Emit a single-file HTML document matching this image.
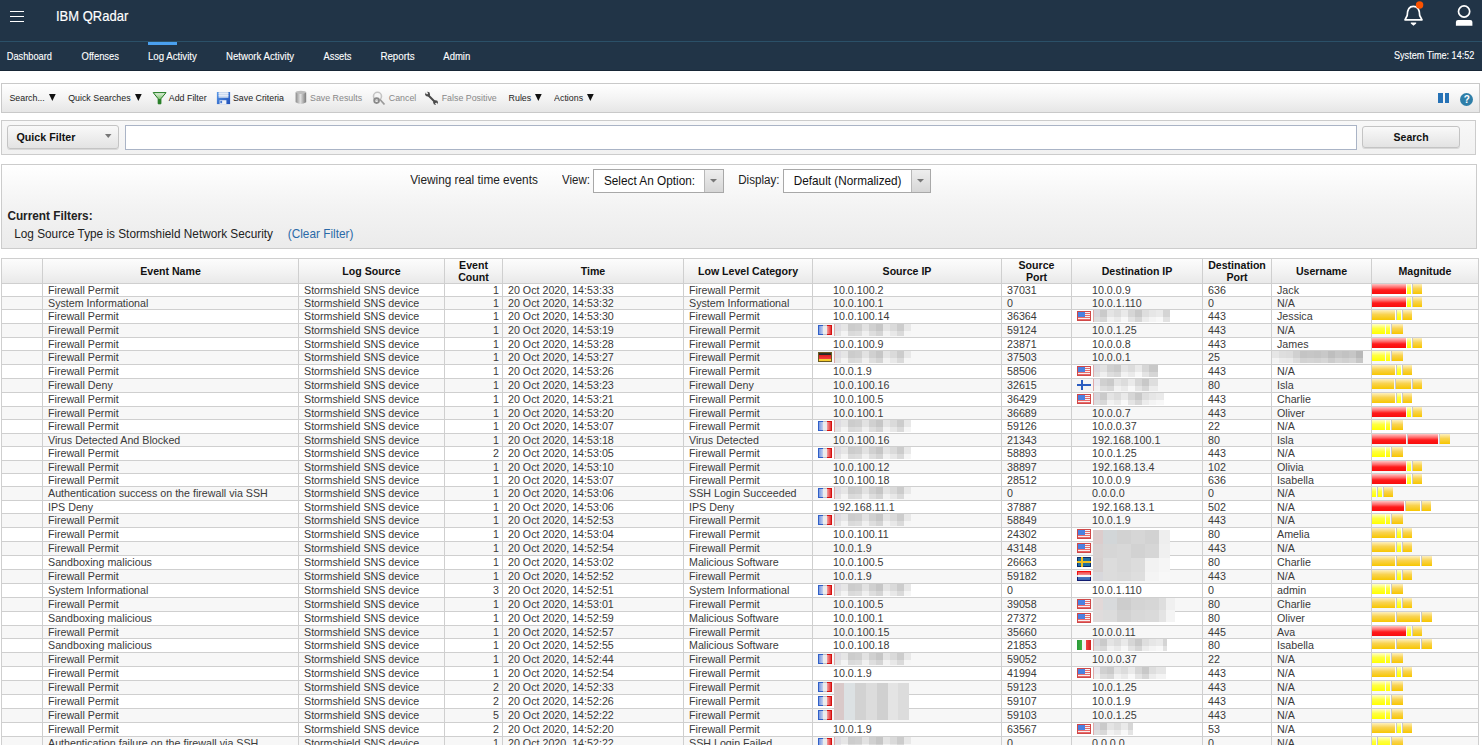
<!DOCTYPE html><html><head><meta charset="utf-8"><style>
*{box-sizing:border-box}
html,body{margin:0;padding:0;width:1482px;height:745px;overflow:hidden;background:#fff;font-family:"Liberation Sans",sans-serif;position:relative}
.a{position:absolute;white-space:nowrap}
.hl{position:absolute;height:1px;background:#cfcfcf}
.vl{position:absolute;width:1px;background:#cfcfcf}
.t{position:absolute;white-space:nowrap;font-size:10.7px;color:#3a3a3a;line-height:12px}
.th{position:absolute;white-space:nowrap;font-size:10.6px;font-weight:bold;color:#111;text-align:center;line-height:12px}
.fl{position:absolute;width:14px;height:10px;display:block;overflow:hidden}
b{position:absolute;display:block}
.mg{position:absolute;display:block;height:10px}
</style></head><body>

<div class="a" style="left:0;top:0;width:1482px;height:71px;background:#213447"></div>
<div class="a" style="left:0;top:41px;width:1482px;height:1px;background:#2b5068"></div>
<div class="a" style="left:0;top:70px;width:1482px;height:1px;background:#172636"></div>
<div class="a" style="left:10px;top:10.5px;width:14px;height:1.6px;background:#fff"></div>
<div class="a" style="left:10px;top:15.5px;width:14px;height:1.6px;background:#fff"></div>
<div class="a" style="left:10px;top:20.5px;width:14px;height:1.6px;background:#fff"></div>
<div class="a" style="left:56px;top:6.8px;font-size:13px;color:#fff;line-height:20px;-webkit-text-stroke:0.15px #fff;transform:scaleY(1.09);transform-origin:0 14.50px;">IBM QRadar</div>
<div class="a" style="left:6.7px;top:51px;font-size:9.28px;color:#fff;line-height:12px;-webkit-text-stroke:0.1px #fff;transform:scaleY(1.08);transform-origin:0 9.22px;">Dashboard</div>
<div class="a" style="left:81.6px;top:51px;font-size:9.4px;color:#fff;line-height:12px;-webkit-text-stroke:0.1px #fff;transform:scaleY(1.08);transform-origin:0 9.26px;">Offenses</div>
<div class="a" style="left:148px;top:51px;font-size:9.66px;color:#fff;line-height:12px;-webkit-text-stroke:0.1px #fff;transform:scaleY(1.08);transform-origin:0 9.35px;">Log Activity</div>
<div class="a" style="left:226px;top:51px;font-size:9.66px;color:#fff;line-height:12px;-webkit-text-stroke:0.1px #fff;transform:scaleY(1.08);transform-origin:0 9.35px;">Network Activity</div>
<div class="a" style="left:323.5px;top:51px;font-size:9.33px;color:#fff;line-height:12px;-webkit-text-stroke:0.1px #fff;transform:scaleY(1.08);transform-origin:0 9.23px;">Assets</div>
<div class="a" style="left:380.4px;top:51px;font-size:9.77px;color:#fff;line-height:12px;-webkit-text-stroke:0.1px #fff;transform:scaleY(1.08);transform-origin:0 9.39px;">Reports</div>
<div class="a" style="left:443.3px;top:51px;font-size:9.52px;color:#fff;line-height:12px;-webkit-text-stroke:0.1px #fff;transform:scaleY(1.08);transform-origin:0 9.30px;">Admin</div>
<div class="a" style="left:148px;top:42px;width:29px;height:3px;background:#4aa0f0"></div>
<div class="a" style="left:1394px;top:50px;font-size:9.1px;color:#fff;line-height:12px;-webkit-text-stroke:0.1px #fff;transform:scaleY(1.12);transform-origin:0 9.15px;">System Time: 14:52</div>
<svg class="a" style="left:1400px;top:0" width="82" height="30" viewBox="0 0 82 30">
<path d="M5 19.8 L7.2 15.5 Q7.3 6.4 13.4 6.4 Q19.6 6.4 19.7 15.5 L22 19.8 Z" fill="none" stroke="#fff" stroke-width="1.7" stroke-linejoin="round"/>
<path d="M10.8 22.6 L16.2 22.6 L16.2 23.6 L13.5 25.8 L10.8 23.6 Z" fill="#fff"/>
<circle cx="19.6" cy="5" r="3.7" fill="#fb5200"/>
<circle cx="64.1" cy="11.5" r="5.6" fill="none" stroke="#fff" stroke-width="1.7"/>
<path d="M55.9 25.8 L55.9 22 Q55.9 20 58 20 L70.3 20 Q72.4 20 72.4 22 L72.4 25.8 Z" fill="#fff"/>
</svg>
<div class="a" style="left:1px;top:83px;width:1479px;height:30px;border:1px solid #c9c9c9;background:linear-gradient(#ffffff,#f4f4f4 50%,#e6e6e6)"></div>
<div class="a" style="left:9.4px;top:92px;font-size:8.85px;color:#222;line-height:12px;transform:scaleY(1.12);transform-origin:0 9.07px;">Search...</div>
<svg class="a" style="left:49.1px;top:94px" width="7" height="7"><path d="M0 0 L6.7 0 L3.35 6.9 Z" fill="#111"/></svg>
<div class="a" style="left:68.2px;top:92px;font-size:8.85px;color:#222;line-height:12px;transform:scaleY(1.12);transform-origin:0 9.07px;">Quick Searches</div>
<svg class="a" style="left:135.4px;top:94px" width="7" height="7"><path d="M0 0 L6.7 0 L3.35 6.9 Z" fill="#111"/></svg>
<div class="a" style="left:168.8px;top:92px;font-size:8.85px;color:#222;line-height:12px;transform:scaleY(1.12);transform-origin:0 9.07px;">Add Filter</div>
<div class="a" style="left:232.9px;top:92px;font-size:8.85px;color:#222;line-height:12px;transform:scaleY(1.12);transform-origin:0 9.07px;">Save Criteria</div>
<div class="a" style="left:310px;top:92px;font-size:8.85px;color:#888;line-height:12px;transform:scaleY(1.12);transform-origin:0 9.07px;">Save Results</div>
<div class="a" style="left:388.8px;top:92px;font-size:8.85px;color:#888;line-height:12px;transform:scaleY(1.12);transform-origin:0 9.07px;">Cancel</div>
<div class="a" style="left:441.7px;top:92px;font-size:8.85px;color:#888;line-height:12px;transform:scaleY(1.12);transform-origin:0 9.07px;">False Positive</div>
<div class="a" style="left:508.6px;top:92px;font-size:8.85px;color:#222;line-height:12px;transform:scaleY(1.12);transform-origin:0 9.07px;">Rules</div>
<svg class="a" style="left:535.2px;top:94px" width="7" height="7"><path d="M0 0 L6.7 0 L3.35 6.9 Z" fill="#111"/></svg>
<div class="a" style="left:554.1px;top:92px;font-size:8.85px;color:#222;line-height:12px;transform:scaleY(1.12);transform-origin:0 9.07px;">Actions</div>
<svg class="a" style="left:587.2px;top:94px" width="7" height="7"><path d="M0 0 L6.7 0 L3.35 6.9 Z" fill="#111"/></svg>
<svg class="a" style="left:150px;top:88px" width="300" height="20" viewBox="0 0 300 20">
<defs><linearGradient id="gf" x1="0" y1="0" x2="0" y2="1"><stop offset="0" stop-color="#9ad08a"/><stop offset="0.5" stop-color="#2e9a2e"/><stop offset="1" stop-color="#1a6a1a"/></linearGradient>
<linearGradient id="gd" x1="0" y1="0" x2="1" y2="0"><stop offset="0" stop-color="#8a8a8a"/><stop offset="0.45" stop-color="#e0e0e0"/><stop offset="1" stop-color="#7a7a7a"/></linearGradient></defs>
<linearGradient id="gf2" x1="0" y1="0" x2="0" y2="1"><stop offset="0" stop-color="#e8f4e4"/><stop offset="0.6" stop-color="#7cc06c"/><stop offset="1" stop-color="#2a8a2a"/></linearGradient>
<path d="M3.2 4.6 L16 4.6 L10.9 10.8 L10.9 15.8 L8.2 15.8 L8.2 10.8 Z" fill="url(#gf2)" stroke="#1f7a1f" stroke-width="1" stroke-linejoin="round"/>
<path d="M8.2 11 L10.9 11 L10.9 15.8 L8.2 15.8 Z" fill="#2a7f2a"/>
<defs><linearGradient id="gs" x1="0" y1="0" x2="1" y2="1"><stop offset="0" stop-color="#5a9ae8"/><stop offset="1" stop-color="#1f4fb8"/></linearGradient></defs>
<rect x="66.9" y="4" width="13.2" height="12.1" fill="url(#gs)"/>
<rect x="68.6" y="4" width="9.8" height="5.8" fill="#c8d8ee"/>
<rect x="68.6" y="5.3" width="9.8" height="0.8" fill="#f2f6fc"/>
<rect x="68.6" y="7.3" width="9.8" height="0.8" fill="#f2f6fc"/>
<rect x="69.6" y="12.2" width="6.8" height="3.9" fill="#eef2f8"/>
<rect x="70.3" y="12.8" width="1.8" height="2.4" fill="#4a7ad0"/>
<ellipse cx="150.9" cy="4.5" rx="5.3" ry="1.8" fill="#bdbdbd"/>
<path d="M145.6 4.5 L145.6 14.3 Q150.9 17.8 156.2 14.3 L156.2 4.5 Q150.9 7.8 145.6 4.5Z" fill="url(#gd)"/>
<circle cx="227.5" cy="8.3" r="4" fill="none" stroke="#c4c4c4" stroke-width="1.6"/>
<circle cx="226.6" cy="12.6" r="2.4" fill="none" stroke="#8a8a8a" stroke-width="1.8"/>
<path d="M230 11.5 L234.5 16.5" stroke="#9a9a9a" stroke-width="1.8"/>
<path d="M278 7 L285 14" stroke="#4a4a4a" stroke-width="2" stroke-linecap="round"/>
<circle cx="277.6" cy="6.2" r="2.4" fill="#4a4a4a"/>
<circle cx="285.6" cy="14.6" r="2.4" fill="#4a4a4a"/>
<path d="M275.2 4.6 L276.6 3 L278.2 5.4 L277 6.4 Z" fill="#f3f3f3"/>
<path d="M288 16.2 L286.6 17.8 L285 15.4 L286.2 14.4 Z" fill="#f0f0f0"/>
</svg>
<div class="a" style="left:1438px;top:93px;width:4.5px;height:10px;background:#2672b6"></div>
<div class="a" style="left:1444.5px;top:93px;width:4.5px;height:10px;background:#2672b6"></div>
<div class="a" style="left:1460px;top:92.6px;width:13.4px;height:13.4px;border-radius:50%;background:#2e7ea8;color:#fff;font-size:10px;font-weight:bold;text-align:center;line-height:13.4px">?</div>
<div class="a" style="left:1px;top:120px;width:1475px;height:35px;border:1px solid #cccccc;background:linear-gradient(#f8f8f8,#f1f1f1)"></div>
<div class="a" style="left:7px;top:125px;width:112px;height:24px;border:1px solid #c4c4c4;border-radius:3px;background:linear-gradient(#f9f9f9,#e3e3e3);box-shadow:0 1px 0 #d8d8d8"></div>
<div class="a" style="left:16.5px;top:130px;font-size:10.7px;font-weight:bold;color:#111;line-height:14px">Quick Filter</div>
<svg class="a" style="left:105px;top:134px" width="7" height="5"><path d="M0 0 L6.5 0 L3.25 4 Z" fill="#777"/></svg>
<div class="a" style="left:125px;top:125px;width:1232px;height:25px;border:1px solid #aab4c6;background:#fff"></div>
<div class="a" style="left:1362px;top:126px;width:98px;height:22px;border:1px solid #c4c4c4;border-radius:3px;background:linear-gradient(#f9f9f9,#e3e3e3);box-shadow:0 1px 0 #d8d8d8"></div>
<div class="a" style="left:1393.6px;top:130px;font-size:10.5px;font-weight:bold;color:#111;line-height:14px">Search</div>
<div class="a" style="left:1px;top:164px;width:1476px;height:85px;border:1px solid #cccccc;background:linear-gradient(#ffffff,#f3f3f3 50%,#ebebeb)"></div>
<div class="a" style="left:410.2px;top:173px;font-size:11.8px;color:#222;line-height:14px;transform:scaleY(1.09);transform-origin:0 11.09px;">Viewing real time events</div>
<div class="a" style="left:562px;top:173px;font-size:11.5px;color:#222;line-height:14px;transform:scaleY(1.09);transform-origin:0 11.09px;">View:</div>
<div class="a" style="left:593px;top:169px;width:131px;height:24px;border:1px solid #a8a8a8;background:#fff"></div>
<div class="a" style="left:704px;top:170px;width:19px;height:22px;border-left:1px solid #b8b8b8;background:linear-gradient(#eeeeee,#d6d6d6)"></div>
<svg class="a" style="left:710px;top:179px" width="8" height="5"><path d="M0 0 L7 0 L3.5 3.5 Z" fill="#777"/></svg>
<div class="a" style="left:603.9px;top:174px;font-size:11.8px;color:#111;line-height:14px;transform:scaleY(1.09);transform-origin:0 11.09px;">Select An Option:</div>
<div class="a" style="left:738.2px;top:173px;font-size:11.600000000000001px;color:#222;line-height:14px;transform:scaleY(1.09);transform-origin:0 11.09px;">Display:</div>
<div class="a" style="left:783px;top:169px;width:148px;height:24px;border:1px solid #a8a8a8;background:#fff"></div>
<div class="a" style="left:911px;top:170px;width:19px;height:22px;border-left:1px solid #b8b8b8;background:linear-gradient(#eeeeee,#d6d6d6)"></div>
<svg class="a" style="left:917px;top:179px" width="8" height="5"><path d="M0 0 L7 0 L3.5 3.5 Z" fill="#777"/></svg>
<div class="a" style="left:793.8px;top:174px;font-size:11.75px;color:#111;line-height:14px;transform:scaleY(1.09);transform-origin:0 11.09px;">Default (Normalized)</div>
<div class="a" style="left:7.4px;top:209px;font-size:11.8px;font-weight:bold;color:#222;line-height:14px;transform:scaleY(1.09);transform-origin:0 11.09px;">Current Filters:</div>
<div class="a" style="left:14.2px;top:227px;font-size:11.8px;color:#222;line-height:14px;transform:scaleY(1.09);transform-origin:0 11.09px;">Log Source Type is Stormshield Network Security</div>
<div class="a" style="left:287.8px;top:227px;font-size:11.8px;color:#2a6aa8;line-height:14px;transform:scaleY(1.09);transform-origin:0 11.09px;">(Clear Filter)</div>
<div class="a" style="left:1px;top:258px;width:1478px;height:25px;background:linear-gradient(#fdfdfd,#f3f3f3 55%,#e9e9e9)"></div>
<div class="a" style="left:1px;top:283px;width:1478px;height:13px;background:#ffffff"></div>
<div class="a" style="left:1px;top:296px;width:1478px;height:13px;background:#f7f7f7"></div>
<div class="a" style="left:1px;top:309px;width:1478px;height:14px;background:#ffffff"></div>
<div class="a" style="left:1px;top:323px;width:1478px;height:14px;background:#f7f7f7"></div>
<div class="a" style="left:1px;top:337px;width:1478px;height:13px;background:#ffffff"></div>
<div class="a" style="left:1px;top:350px;width:1478px;height:14px;background:#f7f7f7"></div>
<div class="a" style="left:1px;top:364px;width:1478px;height:14px;background:#ffffff"></div>
<div class="a" style="left:1px;top:378px;width:1478px;height:14px;background:#f7f7f7"></div>
<div class="a" style="left:1px;top:392px;width:1478px;height:14px;background:#ffffff"></div>
<div class="a" style="left:1px;top:406px;width:1478px;height:13px;background:#f7f7f7"></div>
<div class="a" style="left:1px;top:419px;width:1478px;height:14px;background:#ffffff"></div>
<div class="a" style="left:1px;top:433px;width:1478px;height:13px;background:#f7f7f7"></div>
<div class="a" style="left:1px;top:446px;width:1478px;height:14px;background:#ffffff"></div>
<div class="a" style="left:1px;top:460px;width:1478px;height:13px;background:#f7f7f7"></div>
<div class="a" style="left:1px;top:473px;width:1478px;height:13px;background:#ffffff"></div>
<div class="a" style="left:1px;top:486px;width:1478px;height:14px;background:#f7f7f7"></div>
<div class="a" style="left:1px;top:500px;width:1478px;height:13px;background:#ffffff"></div>
<div class="a" style="left:1px;top:513px;width:1478px;height:14px;background:#f7f7f7"></div>
<div class="a" style="left:1px;top:527px;width:1478px;height:14px;background:#ffffff"></div>
<div class="a" style="left:1px;top:541px;width:1478px;height:14px;background:#f7f7f7"></div>
<div class="a" style="left:1px;top:555px;width:1478px;height:14px;background:#ffffff"></div>
<div class="a" style="left:1px;top:569px;width:1478px;height:14px;background:#f7f7f7"></div>
<div class="a" style="left:1px;top:583px;width:1478px;height:14px;background:#ffffff"></div>
<div class="a" style="left:1px;top:597px;width:1478px;height:14px;background:#f7f7f7"></div>
<div class="a" style="left:1px;top:611px;width:1478px;height:14px;background:#ffffff"></div>
<div class="a" style="left:1px;top:625px;width:1478px;height:13px;background:#f7f7f7"></div>
<div class="a" style="left:1px;top:638px;width:1478px;height:14px;background:#ffffff"></div>
<div class="a" style="left:1px;top:652px;width:1478px;height:14px;background:#f7f7f7"></div>
<div class="a" style="left:1px;top:666px;width:1478px;height:14px;background:#ffffff"></div>
<div class="a" style="left:1px;top:680px;width:1478px;height:14px;background:#f7f7f7"></div>
<div class="a" style="left:1px;top:694px;width:1478px;height:14px;background:#ffffff"></div>
<div class="a" style="left:1px;top:708px;width:1478px;height:14px;background:#f7f7f7"></div>
<div class="a" style="left:1px;top:722px;width:1478px;height:14px;background:#ffffff"></div>
<div class="a" style="left:1px;top:736px;width:1478px;height:14px;background:#f7f7f7"></div>
<div class="hl" style="left:1px;top:258px;width:1478px"></div>
<div class="hl" style="left:1px;top:283px;width:1478px"></div>
<div class="hl" style="left:1px;top:296px;width:1478px"></div>
<div class="hl" style="left:1px;top:309px;width:1478px"></div>
<div class="hl" style="left:1px;top:323px;width:1478px"></div>
<div class="hl" style="left:1px;top:337px;width:1478px"></div>
<div class="hl" style="left:1px;top:350px;width:1478px"></div>
<div class="hl" style="left:1px;top:364px;width:1478px"></div>
<div class="hl" style="left:1px;top:378px;width:1478px"></div>
<div class="hl" style="left:1px;top:392px;width:1478px"></div>
<div class="hl" style="left:1px;top:406px;width:1478px"></div>
<div class="hl" style="left:1px;top:419px;width:1478px"></div>
<div class="hl" style="left:1px;top:433px;width:1478px"></div>
<div class="hl" style="left:1px;top:446px;width:1478px"></div>
<div class="hl" style="left:1px;top:460px;width:1478px"></div>
<div class="hl" style="left:1px;top:473px;width:1478px"></div>
<div class="hl" style="left:1px;top:486px;width:1478px"></div>
<div class="hl" style="left:1px;top:500px;width:1478px"></div>
<div class="hl" style="left:1px;top:513px;width:1478px"></div>
<div class="hl" style="left:1px;top:527px;width:1478px"></div>
<div class="hl" style="left:1px;top:541px;width:1478px"></div>
<div class="hl" style="left:1px;top:555px;width:1478px"></div>
<div class="hl" style="left:1px;top:569px;width:1478px"></div>
<div class="hl" style="left:1px;top:583px;width:1478px"></div>
<div class="hl" style="left:1px;top:597px;width:1478px"></div>
<div class="hl" style="left:1px;top:611px;width:1478px"></div>
<div class="hl" style="left:1px;top:625px;width:1478px"></div>
<div class="hl" style="left:1px;top:638px;width:1478px"></div>
<div class="hl" style="left:1px;top:652px;width:1478px"></div>
<div class="hl" style="left:1px;top:666px;width:1478px"></div>
<div class="hl" style="left:1px;top:680px;width:1478px"></div>
<div class="hl" style="left:1px;top:694px;width:1478px"></div>
<div class="hl" style="left:1px;top:708px;width:1478px"></div>
<div class="hl" style="left:1px;top:722px;width:1478px"></div>
<div class="hl" style="left:1px;top:736px;width:1478px"></div>
<div class="hl" style="left:1px;top:750px;width:1478px"></div>
<div class="vl" style="left:1px;top:258px;height:487px"></div>
<div class="vl" style="left:42px;top:258px;height:487px"></div>
<div class="vl" style="left:298px;top:258px;height:487px"></div>
<div class="vl" style="left:444px;top:258px;height:487px"></div>
<div class="vl" style="left:502px;top:258px;height:487px"></div>
<div class="vl" style="left:683px;top:258px;height:487px"></div>
<div class="vl" style="left:812px;top:258px;height:487px"></div>
<div class="vl" style="left:1001px;top:258px;height:487px"></div>
<div class="vl" style="left:1071px;top:258px;height:487px"></div>
<div class="vl" style="left:1202px;top:258px;height:487px"></div>
<div class="vl" style="left:1271px;top:258px;height:487px"></div>
<div class="vl" style="left:1371px;top:258px;height:487px"></div>
<div class="vl" style="left:1478px;top:258px;height:487px"></div>
<div class="th" style="left:43px;top:265px;width:255px">Event Name</div>
<div class="th" style="left:299px;top:265px;width:145px">Log Source</div>
<div class="th" style="left:445px;top:260px;width:57px;line-height:11.6px">Event<br>Count</div>
<div class="th" style="left:503px;top:265px;width:180px">Time</div>
<div class="th" style="left:684px;top:265px;width:128px">Low Level Category</div>
<div class="th" style="left:813px;top:265px;width:188px">Source IP</div>
<div class="th" style="left:1002px;top:260px;width:69px;line-height:11.6px">Source<br>Port</div>
<div class="th" style="left:1072px;top:265px;width:130px">Destination IP</div>
<div class="th" style="left:1203px;top:260px;width:68px;line-height:11.6px">Destination<br>Port</div>
<div class="th" style="left:1272px;top:265px;width:99px">Username</div>
<div class="th" style="left:1372px;top:265px;width:106px">Magnitude</div>
<div class="t" style="left:48px;top:284px;line-height:12px">Firewall Permit</div>
<div class="t" style="left:304px;top:284px;line-height:12px">Stormshield SNS device</div>
<div class="t" style="left:445px;top:284px;width:54px;text-align:right;line-height:12px">1</div>
<div class="t" style="left:508px;top:284px;line-height:12px">20 Oct 2020, 14:53:33</div>
<div class="t" style="left:689px;top:284px;line-height:12px">Firewall Permit</div>
<div class="t" style="left:833px;top:284px;line-height:12px">10.0.100.2</div>
<div class="t" style="left:1007px;top:284px;line-height:12px">37031</div>
<div class="t" style="left:1092px;top:284px;line-height:12px">10.0.0.9</div>
<div class="t" style="left:1208px;top:284px;line-height:12px">636</div>
<div class="t" style="left:1277px;top:284px;line-height:12px">Jack</div>
<b class="mg" style="left:1372px;top:284px;width:34px;background:linear-gradient(#ffc4c4 0%,#ff6a6a 35%,#ff1a1a 60%,#f80d0d 100%)"></b>
<b class="mg" style="left:1407px;top:284px;width:4px;background:linear-gradient(#ffffc8 0%,#ffff40 45%,#ffff00 100%)"></b>
<b style="left:1412px;top:284px;width:1px;height:10px;background:#c8c8c8"></b>
<b class="mg" style="left:1413px;top:284px;width:9px;background:linear-gradient(#fdf0c0 0%,#f9d350 45%,#f7c600 100%)"></b>
<div class="t" style="left:48px;top:297px;line-height:12px">System Informational</div>
<div class="t" style="left:304px;top:297px;line-height:12px">Stormshield SNS device</div>
<div class="t" style="left:445px;top:297px;width:54px;text-align:right;line-height:12px">1</div>
<div class="t" style="left:508px;top:297px;line-height:12px">20 Oct 2020, 14:53:32</div>
<div class="t" style="left:689px;top:297px;line-height:12px">System Informational</div>
<div class="t" style="left:833px;top:297px;line-height:12px">10.0.100.1</div>
<div class="t" style="left:1007px;top:297px;line-height:12px">0</div>
<div class="t" style="left:1092px;top:297px;line-height:12px">10.0.1.110</div>
<div class="t" style="left:1208px;top:297px;line-height:12px">0</div>
<div class="t" style="left:1277px;top:297px;line-height:12px">N/A</div>
<b class="mg" style="left:1372px;top:297px;width:34px;background:linear-gradient(#ffc4c4 0%,#ff6a6a 35%,#ff1a1a 60%,#f80d0d 100%)"></b>
<b class="mg" style="left:1407px;top:297px;width:4px;background:linear-gradient(#ffffc8 0%,#ffff40 45%,#ffff00 100%)"></b>
<b style="left:1412px;top:297px;width:1px;height:10px;background:#c8c8c8"></b>
<b class="mg" style="left:1413px;top:297px;width:9px;background:linear-gradient(#fdf0c0 0%,#f9d350 45%,#f7c600 100%)"></b>
<div class="t" style="left:48px;top:310px;line-height:13px">Firewall Permit</div>
<div class="t" style="left:304px;top:310px;line-height:13px">Stormshield SNS device</div>
<div class="t" style="left:445px;top:310px;width:54px;text-align:right;line-height:13px">1</div>
<div class="t" style="left:508px;top:310px;line-height:13px">20 Oct 2020, 14:53:30</div>
<div class="t" style="left:689px;top:310px;line-height:13px">Firewall Permit</div>
<div class="t" style="left:833px;top:310px;line-height:13px">10.0.100.14</div>
<div class="t" style="left:1007px;top:310px;line-height:13px">36364</div>
<i class="fl" style="left:1077px;top:311px;background:repeating-linear-gradient(#e86a6a 0,#e86a6a 1px,#f6f0f0 1px,#f6f0f0 2px);box-shadow:inset 0 0 0 1px #d04848"><b style="position:absolute;left:1px;top:1px;width:7px;height:5px;background:#4a80e0"></b></i>
<b style="left:1093px;top:310px;width:7px;height:7px;background:#d8d6dc"></b><b style="left:1093px;top:317px;width:7px;height:5px;background:#dedede"></b><b style="left:1100px;top:310px;width:7px;height:7px;background:#cacaca"></b><b style="left:1100px;top:317px;width:7px;height:5px;background:#d8d8d8"></b><b style="left:1107px;top:310px;width:7px;height:7px;background:#e4e4e4"></b><b style="left:1107px;top:317px;width:7px;height:5px;background:#f2f2f2"></b><b style="left:1114px;top:310px;width:7px;height:7px;background:#dcdcdc"></b><b style="left:1114px;top:317px;width:7px;height:5px;background:#eaeaea"></b><b style="left:1121px;top:310px;width:7px;height:7px;background:#eaeaea"></b><b style="left:1121px;top:317px;width:7px;height:5px;background:#f8f8f8"></b><b style="left:1128px;top:310px;width:7px;height:7px;background:#d6d6d6"></b><b style="left:1128px;top:317px;width:7px;height:5px;background:#e4e4e4"></b><b style="left:1135px;top:310px;width:7px;height:7px;background:#c8c8c8"></b><b style="left:1135px;top:317px;width:7px;height:5px;background:#d6d6d6"></b><b style="left:1142px;top:310px;width:7px;height:7px;background:#dedede"></b><b style="left:1142px;top:317px;width:7px;height:5px;background:#ececec"></b><b style="left:1149px;top:310px;width:7px;height:7px;background:#e6e6e6"></b><b style="left:1149px;top:317px;width:7px;height:5px;background:#f4f4f4"></b><b style="left:1156px;top:310px;width:7px;height:7px;background:#eaeaea"></b><b style="left:1156px;top:317px;width:7px;height:5px;background:#f8f8f8"></b><b style="left:1163px;top:310px;width:7px;height:7px;background:#d4d4d4"></b><b style="left:1163px;top:317px;width:7px;height:5px;background:#e2e2e2"></b><b style="left:1093px;top:310px;width:1px;height:12px;background:#e0a8a8"></b>
<div class="t" style="left:1208px;top:310px;line-height:13px">443</div>
<div class="t" style="left:1277px;top:310px;line-height:13px">Jessica</div>
<b class="mg" style="left:1372px;top:310px;width:23px;background:linear-gradient(#fdf0c0 0%,#f9d350 45%,#f7c600 100%)"></b>
<b style="left:1396px;top:310px;width:1px;height:10px;background:#c8c8c8"></b>
<b class="mg" style="left:1397px;top:310px;width:4px;background:linear-gradient(#ffffc8 0%,#ffff40 45%,#ffff00 100%)"></b>
<b style="left:1402px;top:310px;width:1px;height:10px;background:#c8c8c8"></b>
<b class="mg" style="left:1403px;top:310px;width:9px;background:linear-gradient(#fdf0c0 0%,#f9d350 45%,#f7c600 100%)"></b>
<div class="t" style="left:48px;top:324px;line-height:13px">Firewall Permit</div>
<div class="t" style="left:304px;top:324px;line-height:13px">Stormshield SNS device</div>
<div class="t" style="left:445px;top:324px;width:54px;text-align:right;line-height:13px">1</div>
<div class="t" style="left:508px;top:324px;line-height:13px">20 Oct 2020, 14:53:19</div>
<div class="t" style="left:689px;top:324px;line-height:13px">Firewall Permit</div>
<i class="fl" style="left:818px;top:325px;"><b style="left:0;top:0;width:5px;height:10px;border:1px solid #2f5fc8;border-right:0;background:linear-gradient(90deg,#7898e0,#c4d0ee)"></b><b style="left:5px;top:0;width:4px;height:10px;border-top:1px solid #c0c0c8;border-bottom:1px solid #c0c0c8;background:#ececec"></b><b style="left:9px;top:0;width:5px;height:10px;border:1px solid #d41010;border-left:0;background:linear-gradient(90deg,#f4a0a0,#e43030)"></b></i>
<b style="left:834px;top:324px;width:7px;height:7px;background:#dedce2"></b><b style="left:834px;top:331px;width:7px;height:5px;background:#e4e4e4"></b><b style="left:841px;top:324px;width:7px;height:7px;background:#e6e6e6"></b><b style="left:841px;top:331px;width:7px;height:5px;background:#f4f4f4"></b><b style="left:848px;top:324px;width:7px;height:7px;background:#cccccc"></b><b style="left:848px;top:331px;width:7px;height:5px;background:#dadada"></b><b style="left:855px;top:324px;width:7px;height:7px;background:#cfcfcf"></b><b style="left:855px;top:331px;width:7px;height:5px;background:#dddddd"></b><b style="left:862px;top:324px;width:7px;height:7px;background:#e2e2e2"></b><b style="left:862px;top:331px;width:7px;height:5px;background:#f0f0f0"></b><b style="left:869px;top:324px;width:7px;height:7px;background:#d0d0d0"></b><b style="left:869px;top:331px;width:7px;height:5px;background:#dedede"></b><b style="left:876px;top:324px;width:7px;height:7px;background:#c6c6c6"></b><b style="left:876px;top:331px;width:7px;height:5px;background:#d4d4d4"></b><b style="left:883px;top:324px;width:7px;height:7px;background:#e4e4e4"></b><b style="left:883px;top:331px;width:7px;height:5px;background:#f2f2f2"></b><b style="left:890px;top:324px;width:7px;height:7px;background:#dadada"></b><b style="left:890px;top:331px;width:7px;height:5px;background:#e8e8e8"></b><b style="left:897px;top:324px;width:7px;height:7px;background:#cccccc"></b><b style="left:897px;top:331px;width:7px;height:5px;background:#dadada"></b><b style="left:904px;top:324px;width:7px;height:7px;background:#e8e8e8"></b><b style="left:904px;top:331px;width:7px;height:5px;background:#f6f6f6"></b><b style="left:834px;top:324px;width:1px;height:12px;background:#e0a8a8"></b>
<div class="t" style="left:1007px;top:324px;line-height:13px">59124</div>
<div class="t" style="left:1092px;top:324px;line-height:13px">10.0.1.25</div>
<div class="t" style="left:1208px;top:324px;line-height:13px">443</div>
<div class="t" style="left:1277px;top:324px;line-height:13px">N/A</div>
<b class="mg" style="left:1372px;top:324px;width:13px;background:linear-gradient(#ffffc8 0%,#ffff40 45%,#ffff00 100%)"></b>
<b class="mg" style="left:1386px;top:324px;width:4px;background:linear-gradient(#ffffc8 0%,#ffff40 45%,#ffff00 100%)"></b>
<b style="left:1391px;top:324px;width:1px;height:10px;background:#c8c8c8"></b>
<b class="mg" style="left:1392px;top:324px;width:11px;background:linear-gradient(#fdf0c0 0%,#f9d350 45%,#f7c600 100%)"></b>
<div class="t" style="left:48px;top:338px;line-height:12px">Firewall Permit</div>
<div class="t" style="left:304px;top:338px;line-height:12px">Stormshield SNS device</div>
<div class="t" style="left:445px;top:338px;width:54px;text-align:right;line-height:12px">1</div>
<div class="t" style="left:508px;top:338px;line-height:12px">20 Oct 2020, 14:53:28</div>
<div class="t" style="left:689px;top:338px;line-height:12px">Firewall Permit</div>
<div class="t" style="left:833px;top:338px;line-height:12px">10.0.100.9</div>
<div class="t" style="left:1007px;top:338px;line-height:12px">23871</div>
<div class="t" style="left:1092px;top:338px;line-height:12px">10.0.0.8</div>
<div class="t" style="left:1208px;top:338px;line-height:12px">443</div>
<div class="t" style="left:1277px;top:338px;line-height:12px">James</div>
<b class="mg" style="left:1372px;top:338px;width:34px;background:linear-gradient(#ffc4c4 0%,#ff6a6a 35%,#ff1a1a 60%,#f80d0d 100%)"></b>
<b class="mg" style="left:1407px;top:338px;width:4px;background:linear-gradient(#ffffc8 0%,#ffff40 45%,#ffff00 100%)"></b>
<b style="left:1412px;top:338px;width:1px;height:10px;background:#c8c8c8"></b>
<b class="mg" style="left:1413px;top:338px;width:9px;background:linear-gradient(#fdf0c0 0%,#f9d350 45%,#f7c600 100%)"></b>
<div class="t" style="left:48px;top:351px;line-height:13px">Firewall Permit</div>
<div class="t" style="left:304px;top:351px;line-height:13px">Stormshield SNS device</div>
<div class="t" style="left:445px;top:351px;width:54px;text-align:right;line-height:13px">1</div>
<div class="t" style="left:508px;top:351px;line-height:13px">20 Oct 2020, 14:53:27</div>
<div class="t" style="left:689px;top:351px;line-height:13px">Firewall Permit</div>
<i class="fl" style="left:818px;top:352px;background:linear-gradient(#3a3a2a 0,#222 33%,#e02020 34%,#f03a3a 66%,#f8d23a 67%,#f0c020 100%);outline:1px solid #6b5a20;outline-offset:-1px"></i>
<b style="left:834px;top:351px;width:7px;height:7px;background:#dedce2"></b><b style="left:834px;top:358px;width:7px;height:5px;background:#e4e4e4"></b><b style="left:841px;top:351px;width:7px;height:7px;background:#e6e6e6"></b><b style="left:841px;top:358px;width:7px;height:5px;background:#f4f4f4"></b><b style="left:848px;top:351px;width:7px;height:7px;background:#cccccc"></b><b style="left:848px;top:358px;width:7px;height:5px;background:#dadada"></b><b style="left:855px;top:351px;width:7px;height:7px;background:#cfcfcf"></b><b style="left:855px;top:358px;width:7px;height:5px;background:#dddddd"></b><b style="left:862px;top:351px;width:7px;height:7px;background:#e2e2e2"></b><b style="left:862px;top:358px;width:7px;height:5px;background:#f0f0f0"></b><b style="left:869px;top:351px;width:7px;height:7px;background:#d0d0d0"></b><b style="left:869px;top:358px;width:7px;height:5px;background:#dedede"></b><b style="left:876px;top:351px;width:7px;height:7px;background:#c6c6c6"></b><b style="left:876px;top:358px;width:7px;height:5px;background:#d4d4d4"></b><b style="left:883px;top:351px;width:7px;height:7px;background:#e4e4e4"></b><b style="left:883px;top:358px;width:7px;height:5px;background:#f2f2f2"></b><b style="left:890px;top:351px;width:7px;height:7px;background:#dadada"></b><b style="left:890px;top:358px;width:7px;height:5px;background:#e8e8e8"></b><b style="left:897px;top:351px;width:7px;height:7px;background:#cccccc"></b><b style="left:897px;top:358px;width:7px;height:5px;background:#dadada"></b><b style="left:904px;top:351px;width:7px;height:7px;background:#e8e8e8"></b><b style="left:904px;top:358px;width:7px;height:5px;background:#f6f6f6"></b><b style="left:834px;top:351px;width:1px;height:12px;background:#e0a8a8"></b>
<div class="t" style="left:1007px;top:351px;line-height:13px">37503</div>
<div class="t" style="left:1092px;top:351px;line-height:13px">10.0.0.1</div>
<div class="t" style="left:1208px;top:351px;line-height:13px">25</div>
<b style="left:1272px;top:351px;width:7px;height:7px;background:#e6e6e6"></b><b style="left:1272px;top:358px;width:7px;height:5px;background:#f4f4f4"></b><b style="left:1279px;top:351px;width:7px;height:7px;background:#dedede"></b><b style="left:1279px;top:358px;width:7px;height:5px;background:#ececec"></b><b style="left:1286px;top:351px;width:7px;height:7px;background:#dcdcdc"></b><b style="left:1286px;top:358px;width:7px;height:5px;background:#eaeaea"></b><b style="left:1293px;top:351px;width:7px;height:7px;background:#d0d0d0"></b><b style="left:1293px;top:358px;width:7px;height:5px;background:#dedede"></b><b style="left:1300px;top:351px;width:7px;height:7px;background:#c4c4c4"></b><b style="left:1300px;top:358px;width:7px;height:5px;background:#d2d2d2"></b><b style="left:1307px;top:351px;width:7px;height:7px;background:#c6c6c6"></b><b style="left:1307px;top:358px;width:7px;height:5px;background:#d4d4d4"></b><b style="left:1314px;top:351px;width:7px;height:7px;background:#c4c4c4"></b><b style="left:1314px;top:358px;width:7px;height:5px;background:#d2d2d2"></b><b style="left:1321px;top:351px;width:7px;height:7px;background:#c8c8c8"></b><b style="left:1321px;top:358px;width:7px;height:5px;background:#d6d6d6"></b><b style="left:1328px;top:351px;width:7px;height:7px;background:#bebebe"></b><b style="left:1328px;top:358px;width:7px;height:5px;background:#cccccc"></b><b style="left:1335px;top:351px;width:7px;height:7px;background:#c6c6c6"></b><b style="left:1335px;top:358px;width:7px;height:5px;background:#d4d4d4"></b><b style="left:1342px;top:351px;width:7px;height:7px;background:#c2c2c2"></b><b style="left:1342px;top:358px;width:7px;height:5px;background:#d0d0d0"></b><b style="left:1349px;top:351px;width:7px;height:7px;background:#c6c6c6"></b><b style="left:1349px;top:358px;width:7px;height:5px;background:#d4d4d4"></b><b style="left:1356px;top:351px;width:7px;height:7px;background:#b8b8b8"></b><b style="left:1356px;top:358px;width:7px;height:5px;background:#c6c6c6"></b>
<b class="mg" style="left:1372px;top:351px;width:13px;background:linear-gradient(#ffffc8 0%,#ffff40 45%,#ffff00 100%)"></b>
<b class="mg" style="left:1386px;top:351px;width:4px;background:linear-gradient(#ffffc8 0%,#ffff40 45%,#ffff00 100%)"></b>
<b style="left:1391px;top:351px;width:1px;height:10px;background:#c8c8c8"></b>
<b class="mg" style="left:1392px;top:351px;width:11px;background:linear-gradient(#fdf0c0 0%,#f9d350 45%,#f7c600 100%)"></b>
<div class="t" style="left:48px;top:365px;line-height:13px">Firewall Permit</div>
<div class="t" style="left:304px;top:365px;line-height:13px">Stormshield SNS device</div>
<div class="t" style="left:445px;top:365px;width:54px;text-align:right;line-height:13px">1</div>
<div class="t" style="left:508px;top:365px;line-height:13px">20 Oct 2020, 14:53:26</div>
<div class="t" style="left:689px;top:365px;line-height:13px">Firewall Permit</div>
<div class="t" style="left:833px;top:365px;line-height:13px">10.0.1.9</div>
<div class="t" style="left:1007px;top:365px;line-height:13px">58506</div>
<i class="fl" style="left:1077px;top:366px;background:repeating-linear-gradient(#e86a6a 0,#e86a6a 1px,#f6f0f0 1px,#f6f0f0 2px);box-shadow:inset 0 0 0 1px #d04848"><b style="position:absolute;left:1px;top:1px;width:7px;height:5px;background:#4a80e0"></b></i>
<b style="left:1093px;top:365px;width:7px;height:7px;background:#dcdae0"></b><b style="left:1093px;top:372px;width:7px;height:5px;background:#e2e2e2"></b><b style="left:1100px;top:365px;width:7px;height:7px;background:#e2e2e2"></b><b style="left:1100px;top:372px;width:7px;height:5px;background:#f0f0f0"></b><b style="left:1107px;top:365px;width:7px;height:7px;background:#d0d0d0"></b><b style="left:1107px;top:372px;width:7px;height:5px;background:#dedede"></b><b style="left:1114px;top:365px;width:7px;height:7px;background:#cacaca"></b><b style="left:1114px;top:372px;width:7px;height:5px;background:#d8d8d8"></b><b style="left:1121px;top:365px;width:7px;height:7px;background:#e4e4e4"></b><b style="left:1121px;top:372px;width:7px;height:5px;background:#f2f2f2"></b><b style="left:1128px;top:365px;width:7px;height:7px;background:#dcdcdc"></b><b style="left:1128px;top:372px;width:7px;height:5px;background:#eaeaea"></b><b style="left:1135px;top:365px;width:7px;height:7px;background:#eaeaea"></b><b style="left:1135px;top:372px;width:7px;height:5px;background:#f8f8f8"></b><b style="left:1142px;top:365px;width:7px;height:7px;background:#d6d6d6"></b><b style="left:1142px;top:372px;width:7px;height:5px;background:#e4e4e4"></b><b style="left:1149px;top:365px;width:9px;height:7px;background:#c8c8c8"></b><b style="left:1149px;top:372px;width:9px;height:5px;background:#d6d6d6"></b><b style="left:1093px;top:365px;width:1px;height:12px;background:#e0a8a8"></b>
<div class="t" style="left:1208px;top:365px;line-height:13px">443</div>
<div class="t" style="left:1277px;top:365px;line-height:13px">N/A</div>
<b class="mg" style="left:1372px;top:365px;width:23px;background:linear-gradient(#fdf0c0 0%,#f9d350 45%,#f7c600 100%)"></b>
<b style="left:1396px;top:365px;width:1px;height:10px;background:#c8c8c8"></b>
<b class="mg" style="left:1397px;top:365px;width:4px;background:linear-gradient(#ffffc8 0%,#ffff40 45%,#ffff00 100%)"></b>
<b style="left:1402px;top:365px;width:1px;height:10px;background:#c8c8c8"></b>
<b class="mg" style="left:1403px;top:365px;width:9px;background:linear-gradient(#fdf0c0 0%,#f9d350 45%,#f7c600 100%)"></b>
<div class="t" style="left:48px;top:379px;line-height:13px">Firewall Deny</div>
<div class="t" style="left:304px;top:379px;line-height:13px">Stormshield SNS device</div>
<div class="t" style="left:445px;top:379px;width:54px;text-align:right;line-height:13px">1</div>
<div class="t" style="left:508px;top:379px;line-height:13px">20 Oct 2020, 14:53:23</div>
<div class="t" style="left:689px;top:379px;line-height:13px">Firewall Deny</div>
<div class="t" style="left:833px;top:379px;line-height:13px">10.0.100.16</div>
<div class="t" style="left:1007px;top:379px;line-height:13px">32615</div>
<i class="fl" style="left:1077px;top:380px;background:#f4f4f4"><b style="position:absolute;left:0;top:4px;width:14px;height:2px;background:#2a5cc0"></b><b style="position:absolute;left:4px;top:0;width:2px;height:10px;background:#2a5cc0"></b></i>
<b style="left:1093px;top:379px;width:7px;height:7px;background:#eae8ee"></b><b style="left:1093px;top:386px;width:7px;height:5px;background:#f0f0f0"></b><b style="left:1100px;top:379px;width:7px;height:7px;background:#d0d0d0"></b><b style="left:1100px;top:386px;width:7px;height:5px;background:#dedede"></b><b style="left:1107px;top:379px;width:7px;height:7px;background:#cacaca"></b><b style="left:1107px;top:386px;width:7px;height:5px;background:#d8d8d8"></b><b style="left:1114px;top:379px;width:7px;height:7px;background:#e4e4e4"></b><b style="left:1114px;top:386px;width:7px;height:5px;background:#f2f2f2"></b><b style="left:1121px;top:379px;width:7px;height:7px;background:#dcdcdc"></b><b style="left:1121px;top:386px;width:7px;height:5px;background:#eaeaea"></b><b style="left:1128px;top:379px;width:7px;height:7px;background:#eaeaea"></b><b style="left:1128px;top:386px;width:7px;height:5px;background:#f8f8f8"></b><b style="left:1135px;top:379px;width:7px;height:7px;background:#d6d6d6"></b><b style="left:1135px;top:386px;width:7px;height:5px;background:#e4e4e4"></b><b style="left:1142px;top:379px;width:7px;height:7px;background:#c8c8c8"></b><b style="left:1142px;top:386px;width:7px;height:5px;background:#d6d6d6"></b><b style="left:1149px;top:379px;width:9px;height:7px;background:#dedede"></b><b style="left:1149px;top:386px;width:9px;height:5px;background:#ececec"></b><b style="left:1093px;top:379px;width:1px;height:12px;background:#e0a8a8"></b>
<div class="t" style="left:1208px;top:379px;line-height:13px">80</div>
<div class="t" style="left:1277px;top:379px;line-height:13px">Isla</div>
<b class="mg" style="left:1372px;top:379px;width:22px;background:linear-gradient(#fdf0c0 0%,#f9d350 45%,#f7c600 100%)"></b>
<b style="left:1395px;top:379px;width:1px;height:10px;background:#c8c8c8"></b>
<b class="mg" style="left:1396px;top:379px;width:15px;background:linear-gradient(#fdf0c0 0%,#f9d350 45%,#f7c600 100%)"></b>
<b style="left:1412px;top:379px;width:1px;height:10px;background:#c8c8c8"></b>
<b class="mg" style="left:1413px;top:379px;width:9px;background:linear-gradient(#fdf0c0 0%,#f9d350 45%,#f7c600 100%)"></b>
<div class="t" style="left:48px;top:393px;line-height:13px">Firewall Permit</div>
<div class="t" style="left:304px;top:393px;line-height:13px">Stormshield SNS device</div>
<div class="t" style="left:445px;top:393px;width:54px;text-align:right;line-height:13px">1</div>
<div class="t" style="left:508px;top:393px;line-height:13px">20 Oct 2020, 14:53:21</div>
<div class="t" style="left:689px;top:393px;line-height:13px">Firewall Permit</div>
<div class="t" style="left:833px;top:393px;line-height:13px">10.0.100.5</div>
<div class="t" style="left:1007px;top:393px;line-height:13px">36429</div>
<i class="fl" style="left:1077px;top:394px;background:repeating-linear-gradient(#e86a6a 0,#e86a6a 1px,#f6f0f0 1px,#f6f0f0 2px);box-shadow:inset 0 0 0 1px #d04848"><b style="position:absolute;left:1px;top:1px;width:7px;height:5px;background:#4a80e0"></b></i>
<b style="left:1093px;top:393px;width:7px;height:7px;background:#d8d6dc"></b><b style="left:1093px;top:400px;width:7px;height:5px;background:#dedede"></b><b style="left:1100px;top:393px;width:7px;height:7px;background:#cacaca"></b><b style="left:1100px;top:400px;width:7px;height:5px;background:#d8d8d8"></b><b style="left:1107px;top:393px;width:7px;height:7px;background:#e4e4e4"></b><b style="left:1107px;top:400px;width:7px;height:5px;background:#f2f2f2"></b><b style="left:1114px;top:393px;width:7px;height:7px;background:#dcdcdc"></b><b style="left:1114px;top:400px;width:7px;height:5px;background:#eaeaea"></b><b style="left:1121px;top:393px;width:7px;height:7px;background:#eaeaea"></b><b style="left:1121px;top:400px;width:7px;height:5px;background:#f8f8f8"></b><b style="left:1128px;top:393px;width:7px;height:7px;background:#d6d6d6"></b><b style="left:1128px;top:400px;width:7px;height:5px;background:#e4e4e4"></b><b style="left:1135px;top:393px;width:7px;height:7px;background:#c8c8c8"></b><b style="left:1135px;top:400px;width:7px;height:5px;background:#d6d6d6"></b><b style="left:1142px;top:393px;width:7px;height:7px;background:#dedede"></b><b style="left:1142px;top:400px;width:7px;height:5px;background:#ececec"></b><b style="left:1149px;top:393px;width:7px;height:7px;background:#e6e6e6"></b><b style="left:1149px;top:400px;width:7px;height:5px;background:#f4f4f4"></b><b style="left:1156px;top:393px;width:8px;height:7px;background:#eaeaea"></b><b style="left:1156px;top:400px;width:8px;height:5px;background:#f8f8f8"></b><b style="left:1093px;top:393px;width:1px;height:12px;background:#e0a8a8"></b>
<div class="t" style="left:1208px;top:393px;line-height:13px">443</div>
<div class="t" style="left:1277px;top:393px;line-height:13px">Charlie</div>
<b class="mg" style="left:1372px;top:393px;width:23px;background:linear-gradient(#fdf0c0 0%,#f9d350 45%,#f7c600 100%)"></b>
<b style="left:1396px;top:393px;width:1px;height:10px;background:#c8c8c8"></b>
<b class="mg" style="left:1397px;top:393px;width:4px;background:linear-gradient(#ffffc8 0%,#ffff40 45%,#ffff00 100%)"></b>
<b style="left:1402px;top:393px;width:1px;height:10px;background:#c8c8c8"></b>
<b class="mg" style="left:1403px;top:393px;width:9px;background:linear-gradient(#fdf0c0 0%,#f9d350 45%,#f7c600 100%)"></b>
<div class="t" style="left:48px;top:407px;line-height:12px">Firewall Permit</div>
<div class="t" style="left:304px;top:407px;line-height:12px">Stormshield SNS device</div>
<div class="t" style="left:445px;top:407px;width:54px;text-align:right;line-height:12px">1</div>
<div class="t" style="left:508px;top:407px;line-height:12px">20 Oct 2020, 14:53:20</div>
<div class="t" style="left:689px;top:407px;line-height:12px">Firewall Permit</div>
<div class="t" style="left:833px;top:407px;line-height:12px">10.0.100.1</div>
<div class="t" style="left:1007px;top:407px;line-height:12px">36689</div>
<div class="t" style="left:1092px;top:407px;line-height:12px">10.0.0.7</div>
<div class="t" style="left:1208px;top:407px;line-height:12px">443</div>
<div class="t" style="left:1277px;top:407px;line-height:12px">Oliver</div>
<b class="mg" style="left:1372px;top:407px;width:34px;background:linear-gradient(#ffc4c4 0%,#ff6a6a 35%,#ff1a1a 60%,#f80d0d 100%)"></b>
<b class="mg" style="left:1407px;top:407px;width:4px;background:linear-gradient(#ffffc8 0%,#ffff40 45%,#ffff00 100%)"></b>
<b style="left:1412px;top:407px;width:1px;height:10px;background:#c8c8c8"></b>
<b class="mg" style="left:1413px;top:407px;width:9px;background:linear-gradient(#fdf0c0 0%,#f9d350 45%,#f7c600 100%)"></b>
<div class="t" style="left:48px;top:420px;line-height:13px">Firewall Permit</div>
<div class="t" style="left:304px;top:420px;line-height:13px">Stormshield SNS device</div>
<div class="t" style="left:445px;top:420px;width:54px;text-align:right;line-height:13px">1</div>
<div class="t" style="left:508px;top:420px;line-height:13px">20 Oct 2020, 14:53:07</div>
<div class="t" style="left:689px;top:420px;line-height:13px">Firewall Permit</div>
<i class="fl" style="left:818px;top:421px;"><b style="left:0;top:0;width:5px;height:10px;border:1px solid #2f5fc8;border-right:0;background:linear-gradient(90deg,#7898e0,#c4d0ee)"></b><b style="left:5px;top:0;width:4px;height:10px;border-top:1px solid #c0c0c8;border-bottom:1px solid #c0c0c8;background:#ececec"></b><b style="left:9px;top:0;width:5px;height:10px;border:1px solid #d41010;border-left:0;background:linear-gradient(90deg,#f4a0a0,#e43030)"></b></i>
<b style="left:834px;top:420px;width:7px;height:7px;background:#dedce2"></b><b style="left:834px;top:427px;width:7px;height:5px;background:#e4e4e4"></b><b style="left:841px;top:420px;width:7px;height:7px;background:#e6e6e6"></b><b style="left:841px;top:427px;width:7px;height:5px;background:#f4f4f4"></b><b style="left:848px;top:420px;width:7px;height:7px;background:#cccccc"></b><b style="left:848px;top:427px;width:7px;height:5px;background:#dadada"></b><b style="left:855px;top:420px;width:7px;height:7px;background:#cfcfcf"></b><b style="left:855px;top:427px;width:7px;height:5px;background:#dddddd"></b><b style="left:862px;top:420px;width:7px;height:7px;background:#e2e2e2"></b><b style="left:862px;top:427px;width:7px;height:5px;background:#f0f0f0"></b><b style="left:869px;top:420px;width:7px;height:7px;background:#d0d0d0"></b><b style="left:869px;top:427px;width:7px;height:5px;background:#dedede"></b><b style="left:876px;top:420px;width:7px;height:7px;background:#c6c6c6"></b><b style="left:876px;top:427px;width:7px;height:5px;background:#d4d4d4"></b><b style="left:883px;top:420px;width:7px;height:7px;background:#e4e4e4"></b><b style="left:883px;top:427px;width:7px;height:5px;background:#f2f2f2"></b><b style="left:890px;top:420px;width:7px;height:7px;background:#dadada"></b><b style="left:890px;top:427px;width:7px;height:5px;background:#e8e8e8"></b><b style="left:897px;top:420px;width:7px;height:7px;background:#cccccc"></b><b style="left:897px;top:427px;width:7px;height:5px;background:#dadada"></b><b style="left:904px;top:420px;width:7px;height:7px;background:#e8e8e8"></b><b style="left:904px;top:427px;width:7px;height:5px;background:#f6f6f6"></b><b style="left:834px;top:420px;width:1px;height:12px;background:#e0a8a8"></b>
<div class="t" style="left:1007px;top:420px;line-height:13px">59126</div>
<div class="t" style="left:1092px;top:420px;line-height:13px">10.0.0.37</div>
<div class="t" style="left:1208px;top:420px;line-height:13px">22</div>
<div class="t" style="left:1277px;top:420px;line-height:13px">N/A</div>
<b class="mg" style="left:1372px;top:420px;width:13px;background:linear-gradient(#ffffc8 0%,#ffff40 45%,#ffff00 100%)"></b>
<b class="mg" style="left:1386px;top:420px;width:4px;background:linear-gradient(#ffffc8 0%,#ffff40 45%,#ffff00 100%)"></b>
<b style="left:1391px;top:420px;width:1px;height:10px;background:#c8c8c8"></b>
<b class="mg" style="left:1392px;top:420px;width:11px;background:linear-gradient(#fdf0c0 0%,#f9d350 45%,#f7c600 100%)"></b>
<div class="t" style="left:48px;top:434px;line-height:12px">Virus Detected And Blocked</div>
<div class="t" style="left:304px;top:434px;line-height:12px">Stormshield SNS device</div>
<div class="t" style="left:445px;top:434px;width:54px;text-align:right;line-height:12px">1</div>
<div class="t" style="left:508px;top:434px;line-height:12px">20 Oct 2020, 14:53:18</div>
<div class="t" style="left:689px;top:434px;line-height:12px">Virus Detected</div>
<div class="t" style="left:833px;top:434px;line-height:12px">10.0.100.16</div>
<div class="t" style="left:1007px;top:434px;line-height:12px">21343</div>
<div class="t" style="left:1092px;top:434px;line-height:12px">192.168.100.1</div>
<div class="t" style="left:1208px;top:434px;line-height:12px">80</div>
<div class="t" style="left:1277px;top:434px;line-height:12px">Isla</div>
<b class="mg" style="left:1372px;top:434px;width:34px;background:linear-gradient(#ffc4c4 0%,#ff6a6a 35%,#ff1a1a 60%,#f80d0d 100%)"></b>
<b style="left:1407px;top:434px;width:1px;height:10px;background:#c8c8c8"></b>
<b class="mg" style="left:1408px;top:434px;width:30px;background:linear-gradient(#ffc4c4 0%,#ff6a6a 35%,#ff1a1a 60%,#f80d0d 100%)"></b>
<b style="left:1439px;top:434px;width:1px;height:10px;background:#c8c8c8"></b>
<b class="mg" style="left:1440px;top:434px;width:10px;background:linear-gradient(#fdf0c0 0%,#f9d350 45%,#f7c600 100%)"></b>
<div class="t" style="left:48px;top:447px;line-height:13px">Firewall Permit</div>
<div class="t" style="left:304px;top:447px;line-height:13px">Stormshield SNS device</div>
<div class="t" style="left:445px;top:447px;width:54px;text-align:right;line-height:13px">2</div>
<div class="t" style="left:508px;top:447px;line-height:13px">20 Oct 2020, 14:53:05</div>
<div class="t" style="left:689px;top:447px;line-height:13px">Firewall Permit</div>
<i class="fl" style="left:818px;top:448px;"><b style="left:0;top:0;width:5px;height:10px;border:1px solid #2f5fc8;border-right:0;background:linear-gradient(90deg,#7898e0,#c4d0ee)"></b><b style="left:5px;top:0;width:4px;height:10px;border-top:1px solid #c0c0c8;border-bottom:1px solid #c0c0c8;background:#ececec"></b><b style="left:9px;top:0;width:5px;height:10px;border:1px solid #d41010;border-left:0;background:linear-gradient(90deg,#f4a0a0,#e43030)"></b></i>
<b style="left:834px;top:447px;width:7px;height:7px;background:#dedce2"></b><b style="left:834px;top:454px;width:7px;height:5px;background:#e4e4e4"></b><b style="left:841px;top:447px;width:7px;height:7px;background:#e6e6e6"></b><b style="left:841px;top:454px;width:7px;height:5px;background:#f4f4f4"></b><b style="left:848px;top:447px;width:7px;height:7px;background:#cccccc"></b><b style="left:848px;top:454px;width:7px;height:5px;background:#dadada"></b><b style="left:855px;top:447px;width:7px;height:7px;background:#cfcfcf"></b><b style="left:855px;top:454px;width:7px;height:5px;background:#dddddd"></b><b style="left:862px;top:447px;width:7px;height:7px;background:#e2e2e2"></b><b style="left:862px;top:454px;width:7px;height:5px;background:#f0f0f0"></b><b style="left:869px;top:447px;width:7px;height:7px;background:#d0d0d0"></b><b style="left:869px;top:454px;width:7px;height:5px;background:#dedede"></b><b style="left:876px;top:447px;width:7px;height:7px;background:#c6c6c6"></b><b style="left:876px;top:454px;width:7px;height:5px;background:#d4d4d4"></b><b style="left:883px;top:447px;width:7px;height:7px;background:#e4e4e4"></b><b style="left:883px;top:454px;width:7px;height:5px;background:#f2f2f2"></b><b style="left:890px;top:447px;width:7px;height:7px;background:#dadada"></b><b style="left:890px;top:454px;width:7px;height:5px;background:#e8e8e8"></b><b style="left:897px;top:447px;width:7px;height:7px;background:#cccccc"></b><b style="left:897px;top:454px;width:7px;height:5px;background:#dadada"></b><b style="left:904px;top:447px;width:7px;height:7px;background:#e8e8e8"></b><b style="left:904px;top:454px;width:7px;height:5px;background:#f6f6f6"></b><b style="left:834px;top:447px;width:1px;height:12px;background:#e0a8a8"></b>
<div class="t" style="left:1007px;top:447px;line-height:13px">58893</div>
<div class="t" style="left:1092px;top:447px;line-height:13px">10.0.1.25</div>
<div class="t" style="left:1208px;top:447px;line-height:13px">443</div>
<div class="t" style="left:1277px;top:447px;line-height:13px">N/A</div>
<b class="mg" style="left:1372px;top:447px;width:13px;background:linear-gradient(#ffffc8 0%,#ffff40 45%,#ffff00 100%)"></b>
<b class="mg" style="left:1386px;top:447px;width:4px;background:linear-gradient(#ffffc8 0%,#ffff40 45%,#ffff00 100%)"></b>
<b style="left:1391px;top:447px;width:1px;height:10px;background:#c8c8c8"></b>
<b class="mg" style="left:1392px;top:447px;width:11px;background:linear-gradient(#fdf0c0 0%,#f9d350 45%,#f7c600 100%)"></b>
<div class="t" style="left:48px;top:461px;line-height:12px">Firewall Permit</div>
<div class="t" style="left:304px;top:461px;line-height:12px">Stormshield SNS device</div>
<div class="t" style="left:445px;top:461px;width:54px;text-align:right;line-height:12px">1</div>
<div class="t" style="left:508px;top:461px;line-height:12px">20 Oct 2020, 14:53:10</div>
<div class="t" style="left:689px;top:461px;line-height:12px">Firewall Permit</div>
<div class="t" style="left:833px;top:461px;line-height:12px">10.0.100.12</div>
<div class="t" style="left:1007px;top:461px;line-height:12px">38897</div>
<div class="t" style="left:1092px;top:461px;line-height:12px">192.168.13.4</div>
<div class="t" style="left:1208px;top:461px;line-height:12px">102</div>
<div class="t" style="left:1277px;top:461px;line-height:12px">Olivia</div>
<b class="mg" style="left:1372px;top:461px;width:34px;background:linear-gradient(#ffc4c4 0%,#ff6a6a 35%,#ff1a1a 60%,#f80d0d 100%)"></b>
<b class="mg" style="left:1407px;top:461px;width:4px;background:linear-gradient(#ffffc8 0%,#ffff40 45%,#ffff00 100%)"></b>
<b style="left:1412px;top:461px;width:1px;height:10px;background:#c8c8c8"></b>
<b class="mg" style="left:1413px;top:461px;width:9px;background:linear-gradient(#fdf0c0 0%,#f9d350 45%,#f7c600 100%)"></b>
<div class="t" style="left:48px;top:474px;line-height:12px">Firewall Permit</div>
<div class="t" style="left:304px;top:474px;line-height:12px">Stormshield SNS device</div>
<div class="t" style="left:445px;top:474px;width:54px;text-align:right;line-height:12px">1</div>
<div class="t" style="left:508px;top:474px;line-height:12px">20 Oct 2020, 14:53:07</div>
<div class="t" style="left:689px;top:474px;line-height:12px">Firewall Permit</div>
<div class="t" style="left:833px;top:474px;line-height:12px">10.0.100.18</div>
<div class="t" style="left:1007px;top:474px;line-height:12px">28512</div>
<div class="t" style="left:1092px;top:474px;line-height:12px">10.0.0.9</div>
<div class="t" style="left:1208px;top:474px;line-height:12px">636</div>
<div class="t" style="left:1277px;top:474px;line-height:12px">Isabella</div>
<b class="mg" style="left:1372px;top:474px;width:34px;background:linear-gradient(#ffc4c4 0%,#ff6a6a 35%,#ff1a1a 60%,#f80d0d 100%)"></b>
<b class="mg" style="left:1407px;top:474px;width:4px;background:linear-gradient(#ffffc8 0%,#ffff40 45%,#ffff00 100%)"></b>
<b style="left:1412px;top:474px;width:1px;height:10px;background:#c8c8c8"></b>
<b class="mg" style="left:1413px;top:474px;width:9px;background:linear-gradient(#fdf0c0 0%,#f9d350 45%,#f7c600 100%)"></b>
<div class="t" style="left:48px;top:487px;line-height:13px">Authentication success on the firewall via SSH</div>
<div class="t" style="left:304px;top:487px;line-height:13px">Stormshield SNS device</div>
<div class="t" style="left:445px;top:487px;width:54px;text-align:right;line-height:13px">1</div>
<div class="t" style="left:508px;top:487px;line-height:13px">20 Oct 2020, 14:53:06</div>
<div class="t" style="left:689px;top:487px;line-height:13px">SSH Login Succeeded</div>
<i class="fl" style="left:818px;top:488px;"><b style="left:0;top:0;width:5px;height:10px;border:1px solid #2f5fc8;border-right:0;background:linear-gradient(90deg,#7898e0,#c4d0ee)"></b><b style="left:5px;top:0;width:4px;height:10px;border-top:1px solid #c0c0c8;border-bottom:1px solid #c0c0c8;background:#ececec"></b><b style="left:9px;top:0;width:5px;height:10px;border:1px solid #d41010;border-left:0;background:linear-gradient(90deg,#f4a0a0,#e43030)"></b></i>
<b style="left:834px;top:487px;width:7px;height:7px;background:#dedce2"></b><b style="left:834px;top:494px;width:7px;height:5px;background:#e4e4e4"></b><b style="left:841px;top:487px;width:7px;height:7px;background:#e6e6e6"></b><b style="left:841px;top:494px;width:7px;height:5px;background:#f4f4f4"></b><b style="left:848px;top:487px;width:7px;height:7px;background:#cccccc"></b><b style="left:848px;top:494px;width:7px;height:5px;background:#dadada"></b><b style="left:855px;top:487px;width:7px;height:7px;background:#cfcfcf"></b><b style="left:855px;top:494px;width:7px;height:5px;background:#dddddd"></b><b style="left:862px;top:487px;width:7px;height:7px;background:#e2e2e2"></b><b style="left:862px;top:494px;width:7px;height:5px;background:#f0f0f0"></b><b style="left:869px;top:487px;width:7px;height:7px;background:#d0d0d0"></b><b style="left:869px;top:494px;width:7px;height:5px;background:#dedede"></b><b style="left:876px;top:487px;width:7px;height:7px;background:#c6c6c6"></b><b style="left:876px;top:494px;width:7px;height:5px;background:#d4d4d4"></b><b style="left:883px;top:487px;width:7px;height:7px;background:#e4e4e4"></b><b style="left:883px;top:494px;width:7px;height:5px;background:#f2f2f2"></b><b style="left:890px;top:487px;width:7px;height:7px;background:#dadada"></b><b style="left:890px;top:494px;width:7px;height:5px;background:#e8e8e8"></b><b style="left:897px;top:487px;width:7px;height:7px;background:#cccccc"></b><b style="left:897px;top:494px;width:7px;height:5px;background:#dadada"></b><b style="left:904px;top:487px;width:7px;height:7px;background:#e8e8e8"></b><b style="left:904px;top:494px;width:7px;height:5px;background:#f6f6f6"></b><b style="left:834px;top:487px;width:1px;height:12px;background:#e0a8a8"></b>
<div class="t" style="left:1007px;top:487px;line-height:13px">0</div>
<div class="t" style="left:1092px;top:487px;line-height:13px">0.0.0.0</div>
<div class="t" style="left:1208px;top:487px;line-height:13px">0</div>
<div class="t" style="left:1277px;top:487px;line-height:13px">N/A</div>
<b class="mg" style="left:1372px;top:487px;width:4px;background:linear-gradient(#ffffc8 0%,#ffff40 45%,#ffff00 100%)"></b>
<b style="left:1377px;top:487px;width:1px;height:10px;background:#c8c8c8"></b>
<b class="mg" style="left:1378px;top:487px;width:4px;background:linear-gradient(#ffffc8 0%,#ffff40 45%,#ffff00 100%)"></b>
<b style="left:1383px;top:487px;width:1px;height:10px;background:#c8c8c8"></b>
<b class="mg" style="left:1384px;top:487px;width:9px;background:linear-gradient(#fdf0c0 0%,#f9d350 45%,#f7c600 100%)"></b>
<div class="t" style="left:48px;top:501px;line-height:12px">IPS Deny</div>
<div class="t" style="left:304px;top:501px;line-height:12px">Stormshield SNS device</div>
<div class="t" style="left:445px;top:501px;width:54px;text-align:right;line-height:12px">1</div>
<div class="t" style="left:508px;top:501px;line-height:12px">20 Oct 2020, 14:53:06</div>
<div class="t" style="left:689px;top:501px;line-height:12px">IPS Deny</div>
<div class="t" style="left:833px;top:501px;line-height:12px">192.168.11.1</div>
<div class="t" style="left:1007px;top:501px;line-height:12px">37887</div>
<div class="t" style="left:1092px;top:501px;line-height:12px">192.168.13.1</div>
<div class="t" style="left:1208px;top:501px;line-height:12px">502</div>
<div class="t" style="left:1277px;top:501px;line-height:12px">N/A</div>
<b class="mg" style="left:1372px;top:501px;width:32px;background:linear-gradient(#ffc4c4 0%,#ff6a6a 35%,#ff1a1a 60%,#f80d0d 100%)"></b>
<b style="left:1405px;top:501px;width:1px;height:10px;background:#c8c8c8"></b>
<b class="mg" style="left:1406px;top:501px;width:14px;background:linear-gradient(#fdf0c0 0%,#f9d350 45%,#f7c600 100%)"></b>
<b style="left:1421px;top:501px;width:1px;height:10px;background:#c8c8c8"></b>
<b class="mg" style="left:1422px;top:501px;width:9px;background:linear-gradient(#fdf0c0 0%,#f9d350 45%,#f7c600 100%)"></b>
<div class="t" style="left:48px;top:514px;line-height:13px">Firewall Permit</div>
<div class="t" style="left:304px;top:514px;line-height:13px">Stormshield SNS device</div>
<div class="t" style="left:445px;top:514px;width:54px;text-align:right;line-height:13px">1</div>
<div class="t" style="left:508px;top:514px;line-height:13px">20 Oct 2020, 14:52:53</div>
<div class="t" style="left:689px;top:514px;line-height:13px">Firewall Permit</div>
<i class="fl" style="left:818px;top:515px;"><b style="left:0;top:0;width:5px;height:10px;border:1px solid #2f5fc8;border-right:0;background:linear-gradient(90deg,#7898e0,#c4d0ee)"></b><b style="left:5px;top:0;width:4px;height:10px;border-top:1px solid #c0c0c8;border-bottom:1px solid #c0c0c8;background:#ececec"></b><b style="left:9px;top:0;width:5px;height:10px;border:1px solid #d41010;border-left:0;background:linear-gradient(90deg,#f4a0a0,#e43030)"></b></i>
<b style="left:834px;top:514px;width:7px;height:7px;background:#dedce2"></b><b style="left:834px;top:521px;width:7px;height:5px;background:#e4e4e4"></b><b style="left:841px;top:514px;width:7px;height:7px;background:#e6e6e6"></b><b style="left:841px;top:521px;width:7px;height:5px;background:#f4f4f4"></b><b style="left:848px;top:514px;width:7px;height:7px;background:#cccccc"></b><b style="left:848px;top:521px;width:7px;height:5px;background:#dadada"></b><b style="left:855px;top:514px;width:7px;height:7px;background:#cfcfcf"></b><b style="left:855px;top:521px;width:7px;height:5px;background:#dddddd"></b><b style="left:862px;top:514px;width:7px;height:7px;background:#e2e2e2"></b><b style="left:862px;top:521px;width:7px;height:5px;background:#f0f0f0"></b><b style="left:869px;top:514px;width:7px;height:7px;background:#d0d0d0"></b><b style="left:869px;top:521px;width:7px;height:5px;background:#dedede"></b><b style="left:876px;top:514px;width:7px;height:7px;background:#c6c6c6"></b><b style="left:876px;top:521px;width:7px;height:5px;background:#d4d4d4"></b><b style="left:883px;top:514px;width:7px;height:7px;background:#e4e4e4"></b><b style="left:883px;top:521px;width:7px;height:5px;background:#f2f2f2"></b><b style="left:890px;top:514px;width:7px;height:7px;background:#dadada"></b><b style="left:890px;top:521px;width:7px;height:5px;background:#e8e8e8"></b><b style="left:897px;top:514px;width:7px;height:7px;background:#cccccc"></b><b style="left:897px;top:521px;width:7px;height:5px;background:#dadada"></b><b style="left:904px;top:514px;width:7px;height:7px;background:#e8e8e8"></b><b style="left:904px;top:521px;width:7px;height:5px;background:#f6f6f6"></b><b style="left:834px;top:514px;width:1px;height:12px;background:#e0a8a8"></b>
<div class="t" style="left:1007px;top:514px;line-height:13px">58849</div>
<div class="t" style="left:1092px;top:514px;line-height:13px">10.0.1.9</div>
<div class="t" style="left:1208px;top:514px;line-height:13px">443</div>
<div class="t" style="left:1277px;top:514px;line-height:13px">N/A</div>
<b class="mg" style="left:1372px;top:514px;width:13px;background:linear-gradient(#ffffc8 0%,#ffff40 45%,#ffff00 100%)"></b>
<b class="mg" style="left:1386px;top:514px;width:4px;background:linear-gradient(#ffffc8 0%,#ffff40 45%,#ffff00 100%)"></b>
<b style="left:1391px;top:514px;width:1px;height:10px;background:#c8c8c8"></b>
<b class="mg" style="left:1392px;top:514px;width:11px;background:linear-gradient(#fdf0c0 0%,#f9d350 45%,#f7c600 100%)"></b>
<div class="t" style="left:48px;top:528px;line-height:13px">Firewall Permit</div>
<div class="t" style="left:304px;top:528px;line-height:13px">Stormshield SNS device</div>
<div class="t" style="left:445px;top:528px;width:54px;text-align:right;line-height:13px">1</div>
<div class="t" style="left:508px;top:528px;line-height:13px">20 Oct 2020, 14:53:04</div>
<div class="t" style="left:689px;top:528px;line-height:13px">Firewall Permit</div>
<div class="t" style="left:833px;top:528px;line-height:13px">10.0.100.11</div>
<div class="t" style="left:1007px;top:528px;line-height:13px">24302</div>
<i class="fl" style="left:1077px;top:529px;background:repeating-linear-gradient(#e86a6a 0,#e86a6a 1px,#f6f0f0 1px,#f6f0f0 2px);box-shadow:inset 0 0 0 1px #d04848"><b style="position:absolute;left:1px;top:1px;width:7px;height:5px;background:#4a80e0"></b></i>
<div class="t" style="left:1208px;top:528px;line-height:13px">80</div>
<div class="t" style="left:1277px;top:528px;line-height:13px">Amelia</div>
<b class="mg" style="left:1372px;top:528px;width:23px;background:linear-gradient(#fdf0c0 0%,#f9d350 45%,#f7c600 100%)"></b>
<b style="left:1396px;top:528px;width:1px;height:10px;background:#c8c8c8"></b>
<b class="mg" style="left:1397px;top:528px;width:4px;background:linear-gradient(#ffffc8 0%,#ffff40 45%,#ffff00 100%)"></b>
<b style="left:1402px;top:528px;width:1px;height:10px;background:#c8c8c8"></b>
<b class="mg" style="left:1403px;top:528px;width:9px;background:linear-gradient(#fdf0c0 0%,#f9d350 45%,#f7c600 100%)"></b>
<div class="t" style="left:48px;top:542px;line-height:13px">Firewall Permit</div>
<div class="t" style="left:304px;top:542px;line-height:13px">Stormshield SNS device</div>
<div class="t" style="left:445px;top:542px;width:54px;text-align:right;line-height:13px">1</div>
<div class="t" style="left:508px;top:542px;line-height:13px">20 Oct 2020, 14:52:54</div>
<div class="t" style="left:689px;top:542px;line-height:13px">Firewall Permit</div>
<div class="t" style="left:833px;top:542px;line-height:13px">10.0.1.9</div>
<div class="t" style="left:1007px;top:542px;line-height:13px">43148</div>
<i class="fl" style="left:1077px;top:543px;background:repeating-linear-gradient(#e86a6a 0,#e86a6a 1px,#f6f0f0 1px,#f6f0f0 2px);box-shadow:inset 0 0 0 1px #d04848"><b style="position:absolute;left:1px;top:1px;width:7px;height:5px;background:#4a80e0"></b></i>
<div class="t" style="left:1208px;top:542px;line-height:13px">443</div>
<div class="t" style="left:1277px;top:542px;line-height:13px">N/A</div>
<b class="mg" style="left:1372px;top:542px;width:23px;background:linear-gradient(#fdf0c0 0%,#f9d350 45%,#f7c600 100%)"></b>
<b style="left:1396px;top:542px;width:1px;height:10px;background:#c8c8c8"></b>
<b class="mg" style="left:1397px;top:542px;width:4px;background:linear-gradient(#ffffc8 0%,#ffff40 45%,#ffff00 100%)"></b>
<b style="left:1402px;top:542px;width:1px;height:10px;background:#c8c8c8"></b>
<b class="mg" style="left:1403px;top:542px;width:9px;background:linear-gradient(#fdf0c0 0%,#f9d350 45%,#f7c600 100%)"></b>
<div class="t" style="left:48px;top:556px;line-height:13px">Sandboxing malicious</div>
<div class="t" style="left:304px;top:556px;line-height:13px">Stormshield SNS device</div>
<div class="t" style="left:445px;top:556px;width:54px;text-align:right;line-height:13px">1</div>
<div class="t" style="left:508px;top:556px;line-height:13px">20 Oct 2020, 14:53:02</div>
<div class="t" style="left:689px;top:556px;line-height:13px">Malicious Software</div>
<div class="t" style="left:833px;top:556px;line-height:13px">10.0.100.5</div>
<div class="t" style="left:1007px;top:556px;line-height:13px">26663</div>
<i class="fl" style="left:1077px;top:557px;background:#1f6fa0;outline:1px solid #0c2c6a;outline-offset:-1px"><b style="position:absolute;left:0;top:4px;width:14px;height:2px;background:#f0c020"></b><b style="position:absolute;left:4px;top:0;width:2px;height:10px;background:#f0c020"></b></i>
<div class="t" style="left:1208px;top:556px;line-height:13px">80</div>
<div class="t" style="left:1277px;top:556px;line-height:13px">Charlie</div>
<b class="mg" style="left:1372px;top:556px;width:23px;background:linear-gradient(#fdf0c0 0%,#f9d350 45%,#f7c600 100%)"></b>
<b style="left:1396px;top:556px;width:1px;height:10px;background:#c8c8c8"></b>
<b class="mg" style="left:1397px;top:556px;width:23px;background:linear-gradient(#fdf0c0 0%,#f9d350 45%,#f7c600 100%)"></b>
<b style="left:1421px;top:556px;width:1px;height:10px;background:#c8c8c8"></b>
<b class="mg" style="left:1422px;top:556px;width:10px;background:linear-gradient(#fdf0c0 0%,#f9d350 45%,#f7c600 100%)"></b>
<div class="t" style="left:48px;top:570px;line-height:13px">Firewall Permit</div>
<div class="t" style="left:304px;top:570px;line-height:13px">Stormshield SNS device</div>
<div class="t" style="left:445px;top:570px;width:54px;text-align:right;line-height:13px">1</div>
<div class="t" style="left:508px;top:570px;line-height:13px">20 Oct 2020, 14:52:52</div>
<div class="t" style="left:689px;top:570px;line-height:13px">Firewall Permit</div>
<div class="t" style="left:833px;top:570px;line-height:13px">10.0.1.9</div>
<div class="t" style="left:1007px;top:570px;line-height:13px">59182</div>
<i class="fl" style="left:1077px;top:571px;"><b style="left:0;top:0;width:14px;height:4px;border:1px solid #f01010;border-bottom:0;background:linear-gradient(#f04848,#f49090)"></b><b style="left:0;top:4px;width:14px;height:2px;border-left:1px solid #e0e0e0;border-right:1px solid #e0e0e0;background:#f8f8f8"></b><b style="left:0;top:6px;width:14px;height:4px;border:1px solid #101a70;border-top:0;background:linear-gradient(#4a78c0,#3a64b0)"></b></i>
<div class="t" style="left:1208px;top:570px;line-height:13px">443</div>
<div class="t" style="left:1277px;top:570px;line-height:13px">N/A</div>
<b class="mg" style="left:1372px;top:570px;width:23px;background:linear-gradient(#fdf0c0 0%,#f9d350 45%,#f7c600 100%)"></b>
<b style="left:1396px;top:570px;width:1px;height:10px;background:#c8c8c8"></b>
<b class="mg" style="left:1397px;top:570px;width:4px;background:linear-gradient(#ffffc8 0%,#ffff40 45%,#ffff00 100%)"></b>
<b style="left:1402px;top:570px;width:1px;height:10px;background:#c8c8c8"></b>
<b class="mg" style="left:1403px;top:570px;width:9px;background:linear-gradient(#fdf0c0 0%,#f9d350 45%,#f7c600 100%)"></b>
<div class="t" style="left:48px;top:584px;line-height:13px">System Informational</div>
<div class="t" style="left:304px;top:584px;line-height:13px">Stormshield SNS device</div>
<div class="t" style="left:445px;top:584px;width:54px;text-align:right;line-height:13px">3</div>
<div class="t" style="left:508px;top:584px;line-height:13px">20 Oct 2020, 14:52:51</div>
<div class="t" style="left:689px;top:584px;line-height:13px">System Informational</div>
<i class="fl" style="left:818px;top:585px;"><b style="left:0;top:0;width:5px;height:10px;border:1px solid #2f5fc8;border-right:0;background:linear-gradient(90deg,#7898e0,#c4d0ee)"></b><b style="left:5px;top:0;width:4px;height:10px;border-top:1px solid #c0c0c8;border-bottom:1px solid #c0c0c8;background:#ececec"></b><b style="left:9px;top:0;width:5px;height:10px;border:1px solid #d41010;border-left:0;background:linear-gradient(90deg,#f4a0a0,#e43030)"></b></i>
<b style="left:834px;top:584px;width:7px;height:7px;background:#dedce2"></b><b style="left:834px;top:591px;width:7px;height:5px;background:#e4e4e4"></b><b style="left:841px;top:584px;width:7px;height:7px;background:#e6e6e6"></b><b style="left:841px;top:591px;width:7px;height:5px;background:#f4f4f4"></b><b style="left:848px;top:584px;width:7px;height:7px;background:#cccccc"></b><b style="left:848px;top:591px;width:7px;height:5px;background:#dadada"></b><b style="left:855px;top:584px;width:7px;height:7px;background:#cfcfcf"></b><b style="left:855px;top:591px;width:7px;height:5px;background:#dddddd"></b><b style="left:862px;top:584px;width:7px;height:7px;background:#e2e2e2"></b><b style="left:862px;top:591px;width:7px;height:5px;background:#f0f0f0"></b><b style="left:869px;top:584px;width:7px;height:7px;background:#d0d0d0"></b><b style="left:869px;top:591px;width:7px;height:5px;background:#dedede"></b><b style="left:876px;top:584px;width:7px;height:7px;background:#c6c6c6"></b><b style="left:876px;top:591px;width:7px;height:5px;background:#d4d4d4"></b><b style="left:883px;top:584px;width:7px;height:7px;background:#e4e4e4"></b><b style="left:883px;top:591px;width:7px;height:5px;background:#f2f2f2"></b><b style="left:890px;top:584px;width:7px;height:7px;background:#dadada"></b><b style="left:890px;top:591px;width:7px;height:5px;background:#e8e8e8"></b><b style="left:897px;top:584px;width:7px;height:7px;background:#cccccc"></b><b style="left:897px;top:591px;width:7px;height:5px;background:#dadada"></b><b style="left:904px;top:584px;width:7px;height:7px;background:#e8e8e8"></b><b style="left:904px;top:591px;width:7px;height:5px;background:#f6f6f6"></b><b style="left:834px;top:584px;width:1px;height:12px;background:#e0a8a8"></b>
<div class="t" style="left:1007px;top:584px;line-height:13px">0</div>
<div class="t" style="left:1092px;top:584px;line-height:13px">10.0.1.110</div>
<div class="t" style="left:1208px;top:584px;line-height:13px">0</div>
<div class="t" style="left:1277px;top:584px;line-height:13px">admin</div>
<b class="mg" style="left:1372px;top:584px;width:13px;background:linear-gradient(#ffffc8 0%,#ffff40 45%,#ffff00 100%)"></b>
<b class="mg" style="left:1386px;top:584px;width:4px;background:linear-gradient(#ffffc8 0%,#ffff40 45%,#ffff00 100%)"></b>
<b style="left:1391px;top:584px;width:1px;height:10px;background:#c8c8c8"></b>
<b class="mg" style="left:1392px;top:584px;width:11px;background:linear-gradient(#fdf0c0 0%,#f9d350 45%,#f7c600 100%)"></b>
<div class="t" style="left:48px;top:598px;line-height:13px">Firewall Permit</div>
<div class="t" style="left:304px;top:598px;line-height:13px">Stormshield SNS device</div>
<div class="t" style="left:445px;top:598px;width:54px;text-align:right;line-height:13px">1</div>
<div class="t" style="left:508px;top:598px;line-height:13px">20 Oct 2020, 14:53:01</div>
<div class="t" style="left:689px;top:598px;line-height:13px">Firewall Permit</div>
<div class="t" style="left:833px;top:598px;line-height:13px">10.0.100.5</div>
<div class="t" style="left:1007px;top:598px;line-height:13px">39058</div>
<i class="fl" style="left:1077px;top:599px;background:repeating-linear-gradient(#e86a6a 0,#e86a6a 1px,#f6f0f0 1px,#f6f0f0 2px);box-shadow:inset 0 0 0 1px #d04848"><b style="position:absolute;left:1px;top:1px;width:7px;height:5px;background:#4a80e0"></b></i>
<div class="t" style="left:1208px;top:598px;line-height:13px">80</div>
<div class="t" style="left:1277px;top:598px;line-height:13px">Charlie</div>
<b class="mg" style="left:1372px;top:598px;width:23px;background:linear-gradient(#fdf0c0 0%,#f9d350 45%,#f7c600 100%)"></b>
<b style="left:1396px;top:598px;width:1px;height:10px;background:#c8c8c8"></b>
<b class="mg" style="left:1397px;top:598px;width:4px;background:linear-gradient(#ffffc8 0%,#ffff40 45%,#ffff00 100%)"></b>
<b style="left:1402px;top:598px;width:1px;height:10px;background:#c8c8c8"></b>
<b class="mg" style="left:1403px;top:598px;width:9px;background:linear-gradient(#fdf0c0 0%,#f9d350 45%,#f7c600 100%)"></b>
<div class="t" style="left:48px;top:612px;line-height:13px">Sandboxing malicious</div>
<div class="t" style="left:304px;top:612px;line-height:13px">Stormshield SNS device</div>
<div class="t" style="left:445px;top:612px;width:54px;text-align:right;line-height:13px">1</div>
<div class="t" style="left:508px;top:612px;line-height:13px">20 Oct 2020, 14:52:59</div>
<div class="t" style="left:689px;top:612px;line-height:13px">Malicious Software</div>
<div class="t" style="left:833px;top:612px;line-height:13px">10.0.100.1</div>
<div class="t" style="left:1007px;top:612px;line-height:13px">27372</div>
<i class="fl" style="left:1077px;top:613px;background:repeating-linear-gradient(#e86a6a 0,#e86a6a 1px,#f6f0f0 1px,#f6f0f0 2px);box-shadow:inset 0 0 0 1px #d04848"><b style="position:absolute;left:1px;top:1px;width:7px;height:5px;background:#4a80e0"></b></i>
<div class="t" style="left:1208px;top:612px;line-height:13px">80</div>
<div class="t" style="left:1277px;top:612px;line-height:13px">Oliver</div>
<b class="mg" style="left:1372px;top:612px;width:23px;background:linear-gradient(#fdf0c0 0%,#f9d350 45%,#f7c600 100%)"></b>
<b style="left:1396px;top:612px;width:1px;height:10px;background:#c8c8c8"></b>
<b class="mg" style="left:1397px;top:612px;width:23px;background:linear-gradient(#fdf0c0 0%,#f9d350 45%,#f7c600 100%)"></b>
<b style="left:1421px;top:612px;width:1px;height:10px;background:#c8c8c8"></b>
<b class="mg" style="left:1422px;top:612px;width:10px;background:linear-gradient(#fdf0c0 0%,#f9d350 45%,#f7c600 100%)"></b>
<div class="t" style="left:48px;top:626px;line-height:12px">Firewall Permit</div>
<div class="t" style="left:304px;top:626px;line-height:12px">Stormshield SNS device</div>
<div class="t" style="left:445px;top:626px;width:54px;text-align:right;line-height:12px">1</div>
<div class="t" style="left:508px;top:626px;line-height:12px">20 Oct 2020, 14:52:57</div>
<div class="t" style="left:689px;top:626px;line-height:12px">Firewall Permit</div>
<div class="t" style="left:833px;top:626px;line-height:12px">10.0.100.15</div>
<div class="t" style="left:1007px;top:626px;line-height:12px">35660</div>
<div class="t" style="left:1092px;top:626px;line-height:12px">10.0.0.11</div>
<div class="t" style="left:1208px;top:626px;line-height:12px">445</div>
<div class="t" style="left:1277px;top:626px;line-height:12px">Ava</div>
<b class="mg" style="left:1372px;top:626px;width:34px;background:linear-gradient(#ffc4c4 0%,#ff6a6a 35%,#ff1a1a 60%,#f80d0d 100%)"></b>
<b class="mg" style="left:1407px;top:626px;width:4px;background:linear-gradient(#ffffc8 0%,#ffff40 45%,#ffff00 100%)"></b>
<b style="left:1412px;top:626px;width:1px;height:10px;background:#c8c8c8"></b>
<b class="mg" style="left:1413px;top:626px;width:9px;background:linear-gradient(#fdf0c0 0%,#f9d350 45%,#f7c600 100%)"></b>
<div class="t" style="left:48px;top:639px;line-height:13px">Sandboxing malicious</div>
<div class="t" style="left:304px;top:639px;line-height:13px">Stormshield SNS device</div>
<div class="t" style="left:445px;top:639px;width:54px;text-align:right;line-height:13px">1</div>
<div class="t" style="left:508px;top:639px;line-height:13px">20 Oct 2020, 14:52:55</div>
<div class="t" style="left:689px;top:639px;line-height:13px">Malicious Software</div>
<div class="t" style="left:833px;top:639px;line-height:13px">10.0.100.18</div>
<div class="t" style="left:1007px;top:639px;line-height:13px">21853</div>
<i class="fl" style="left:1077px;top:640px;background:linear-gradient(90deg,#2a9a3a 0,#40b040 33%,#f4f4f4 34%,#f4f4f4 66%,#f04040 67%,#d02020 100%)"></i>
<b style="left:1093px;top:639px;width:7px;height:7px;background:#d8d6dc"></b><b style="left:1093px;top:646px;width:7px;height:5px;background:#dedede"></b><b style="left:1100px;top:639px;width:7px;height:7px;background:#cacaca"></b><b style="left:1100px;top:646px;width:7px;height:5px;background:#d8d8d8"></b><b style="left:1107px;top:639px;width:7px;height:7px;background:#e4e4e4"></b><b style="left:1107px;top:646px;width:7px;height:5px;background:#f2f2f2"></b><b style="left:1114px;top:639px;width:7px;height:7px;background:#dcdcdc"></b><b style="left:1114px;top:646px;width:7px;height:5px;background:#eaeaea"></b><b style="left:1121px;top:639px;width:7px;height:7px;background:#eaeaea"></b><b style="left:1121px;top:646px;width:7px;height:5px;background:#f8f8f8"></b><b style="left:1128px;top:639px;width:7px;height:7px;background:#d6d6d6"></b><b style="left:1128px;top:646px;width:7px;height:5px;background:#e4e4e4"></b><b style="left:1135px;top:639px;width:7px;height:7px;background:#c8c8c8"></b><b style="left:1135px;top:646px;width:7px;height:5px;background:#d6d6d6"></b><b style="left:1142px;top:639px;width:7px;height:7px;background:#dedede"></b><b style="left:1142px;top:646px;width:7px;height:5px;background:#ececec"></b><b style="left:1149px;top:639px;width:7px;height:7px;background:#e6e6e6"></b><b style="left:1149px;top:646px;width:7px;height:5px;background:#f4f4f4"></b><b style="left:1156px;top:639px;width:7px;height:7px;background:#eaeaea"></b><b style="left:1156px;top:646px;width:7px;height:5px;background:#f8f8f8"></b><b style="left:1163px;top:639px;width:4px;height:7px;background:#d4d4d4"></b><b style="left:1163px;top:646px;width:4px;height:5px;background:#e2e2e2"></b><b style="left:1093px;top:639px;width:1px;height:12px;background:#e0a8a8"></b>
<div class="t" style="left:1208px;top:639px;line-height:13px">80</div>
<div class="t" style="left:1277px;top:639px;line-height:13px">Isabella</div>
<b class="mg" style="left:1372px;top:639px;width:23px;background:linear-gradient(#fdf0c0 0%,#f9d350 45%,#f7c600 100%)"></b>
<b style="left:1396px;top:639px;width:1px;height:10px;background:#c8c8c8"></b>
<b class="mg" style="left:1397px;top:639px;width:23px;background:linear-gradient(#fdf0c0 0%,#f9d350 45%,#f7c600 100%)"></b>
<b style="left:1421px;top:639px;width:1px;height:10px;background:#c8c8c8"></b>
<b class="mg" style="left:1422px;top:639px;width:10px;background:linear-gradient(#fdf0c0 0%,#f9d350 45%,#f7c600 100%)"></b>
<div class="t" style="left:48px;top:653px;line-height:13px">Firewall Permit</div>
<div class="t" style="left:304px;top:653px;line-height:13px">Stormshield SNS device</div>
<div class="t" style="left:445px;top:653px;width:54px;text-align:right;line-height:13px">1</div>
<div class="t" style="left:508px;top:653px;line-height:13px">20 Oct 2020, 14:52:44</div>
<div class="t" style="left:689px;top:653px;line-height:13px">Firewall Permit</div>
<i class="fl" style="left:818px;top:654px;"><b style="left:0;top:0;width:5px;height:10px;border:1px solid #2f5fc8;border-right:0;background:linear-gradient(90deg,#7898e0,#c4d0ee)"></b><b style="left:5px;top:0;width:4px;height:10px;border-top:1px solid #c0c0c8;border-bottom:1px solid #c0c0c8;background:#ececec"></b><b style="left:9px;top:0;width:5px;height:10px;border:1px solid #d41010;border-left:0;background:linear-gradient(90deg,#f4a0a0,#e43030)"></b></i>
<b style="left:834px;top:653px;width:7px;height:7px;background:#dedce2"></b><b style="left:834px;top:660px;width:7px;height:5px;background:#e4e4e4"></b><b style="left:841px;top:653px;width:7px;height:7px;background:#e6e6e6"></b><b style="left:841px;top:660px;width:7px;height:5px;background:#f4f4f4"></b><b style="left:848px;top:653px;width:7px;height:7px;background:#cccccc"></b><b style="left:848px;top:660px;width:7px;height:5px;background:#dadada"></b><b style="left:855px;top:653px;width:7px;height:7px;background:#cfcfcf"></b><b style="left:855px;top:660px;width:7px;height:5px;background:#dddddd"></b><b style="left:862px;top:653px;width:7px;height:7px;background:#e2e2e2"></b><b style="left:862px;top:660px;width:7px;height:5px;background:#f0f0f0"></b><b style="left:869px;top:653px;width:7px;height:7px;background:#d0d0d0"></b><b style="left:869px;top:660px;width:7px;height:5px;background:#dedede"></b><b style="left:876px;top:653px;width:7px;height:7px;background:#c6c6c6"></b><b style="left:876px;top:660px;width:7px;height:5px;background:#d4d4d4"></b><b style="left:883px;top:653px;width:7px;height:7px;background:#e4e4e4"></b><b style="left:883px;top:660px;width:7px;height:5px;background:#f2f2f2"></b><b style="left:890px;top:653px;width:7px;height:7px;background:#dadada"></b><b style="left:890px;top:660px;width:7px;height:5px;background:#e8e8e8"></b><b style="left:897px;top:653px;width:7px;height:7px;background:#cccccc"></b><b style="left:897px;top:660px;width:7px;height:5px;background:#dadada"></b><b style="left:904px;top:653px;width:7px;height:7px;background:#e8e8e8"></b><b style="left:904px;top:660px;width:7px;height:5px;background:#f6f6f6"></b><b style="left:834px;top:653px;width:1px;height:12px;background:#e0a8a8"></b>
<div class="t" style="left:1007px;top:653px;line-height:13px">59052</div>
<div class="t" style="left:1092px;top:653px;line-height:13px">10.0.0.37</div>
<div class="t" style="left:1208px;top:653px;line-height:13px">22</div>
<div class="t" style="left:1277px;top:653px;line-height:13px">N/A</div>
<b class="mg" style="left:1372px;top:653px;width:13px;background:linear-gradient(#ffffc8 0%,#ffff40 45%,#ffff00 100%)"></b>
<b class="mg" style="left:1386px;top:653px;width:4px;background:linear-gradient(#ffffc8 0%,#ffff40 45%,#ffff00 100%)"></b>
<b style="left:1391px;top:653px;width:1px;height:10px;background:#c8c8c8"></b>
<b class="mg" style="left:1392px;top:653px;width:11px;background:linear-gradient(#fdf0c0 0%,#f9d350 45%,#f7c600 100%)"></b>
<div class="t" style="left:48px;top:667px;line-height:13px">Firewall Permit</div>
<div class="t" style="left:304px;top:667px;line-height:13px">Stormshield SNS device</div>
<div class="t" style="left:445px;top:667px;width:54px;text-align:right;line-height:13px">1</div>
<div class="t" style="left:508px;top:667px;line-height:13px">20 Oct 2020, 14:52:54</div>
<div class="t" style="left:689px;top:667px;line-height:13px">Firewall Permit</div>
<div class="t" style="left:833px;top:667px;line-height:13px">10.0.1.9</div>
<div class="t" style="left:1007px;top:667px;line-height:13px">41994</div>
<i class="fl" style="left:1077px;top:668px;background:repeating-linear-gradient(#e86a6a 0,#e86a6a 1px,#f6f0f0 1px,#f6f0f0 2px);box-shadow:inset 0 0 0 1px #d04848"><b style="position:absolute;left:1px;top:1px;width:7px;height:5px;background:#4a80e0"></b></i>
<b style="left:1093px;top:667px;width:7px;height:7px;background:#eae8ee"></b><b style="left:1093px;top:674px;width:7px;height:5px;background:#f0f0f0"></b><b style="left:1100px;top:667px;width:7px;height:7px;background:#d0d0d0"></b><b style="left:1100px;top:674px;width:7px;height:5px;background:#dedede"></b><b style="left:1107px;top:667px;width:7px;height:7px;background:#cacaca"></b><b style="left:1107px;top:674px;width:7px;height:5px;background:#d8d8d8"></b><b style="left:1114px;top:667px;width:7px;height:7px;background:#e4e4e4"></b><b style="left:1114px;top:674px;width:7px;height:5px;background:#f2f2f2"></b><b style="left:1121px;top:667px;width:7px;height:7px;background:#dcdcdc"></b><b style="left:1121px;top:674px;width:7px;height:5px;background:#eaeaea"></b><b style="left:1128px;top:667px;width:7px;height:7px;background:#eaeaea"></b><b style="left:1128px;top:674px;width:7px;height:5px;background:#f8f8f8"></b><b style="left:1135px;top:667px;width:7px;height:7px;background:#d6d6d6"></b><b style="left:1135px;top:674px;width:7px;height:5px;background:#e4e4e4"></b><b style="left:1142px;top:667px;width:7px;height:7px;background:#c8c8c8"></b><b style="left:1142px;top:674px;width:7px;height:5px;background:#d6d6d6"></b><b style="left:1149px;top:667px;width:7px;height:7px;background:#dedede"></b><b style="left:1149px;top:674px;width:7px;height:5px;background:#ececec"></b><b style="left:1156px;top:667px;width:10px;height:7px;background:#e6e6e6"></b><b style="left:1156px;top:674px;width:10px;height:5px;background:#f4f4f4"></b><b style="left:1093px;top:667px;width:1px;height:12px;background:#e0a8a8"></b>
<div class="t" style="left:1208px;top:667px;line-height:13px">443</div>
<div class="t" style="left:1277px;top:667px;line-height:13px">N/A</div>
<b class="mg" style="left:1372px;top:667px;width:23px;background:linear-gradient(#fdf0c0 0%,#f9d350 45%,#f7c600 100%)"></b>
<b style="left:1396px;top:667px;width:1px;height:10px;background:#c8c8c8"></b>
<b class="mg" style="left:1397px;top:667px;width:4px;background:linear-gradient(#ffffc8 0%,#ffff40 45%,#ffff00 100%)"></b>
<b style="left:1402px;top:667px;width:1px;height:10px;background:#c8c8c8"></b>
<b class="mg" style="left:1403px;top:667px;width:9px;background:linear-gradient(#fdf0c0 0%,#f9d350 45%,#f7c600 100%)"></b>
<div class="t" style="left:48px;top:681px;line-height:13px">Firewall Permit</div>
<div class="t" style="left:304px;top:681px;line-height:13px">Stormshield SNS device</div>
<div class="t" style="left:445px;top:681px;width:54px;text-align:right;line-height:13px">2</div>
<div class="t" style="left:508px;top:681px;line-height:13px">20 Oct 2020, 14:52:33</div>
<div class="t" style="left:689px;top:681px;line-height:13px">Firewall Permit</div>
<i class="fl" style="left:818px;top:682px;"><b style="left:0;top:0;width:5px;height:10px;border:1px solid #2f5fc8;border-right:0;background:linear-gradient(90deg,#7898e0,#c4d0ee)"></b><b style="left:5px;top:0;width:4px;height:10px;border-top:1px solid #c0c0c8;border-bottom:1px solid #c0c0c8;background:#ececec"></b><b style="left:9px;top:0;width:5px;height:10px;border:1px solid #d41010;border-left:0;background:linear-gradient(90deg,#f4a0a0,#e43030)"></b></i>
<div class="t" style="left:1007px;top:681px;line-height:13px">59123</div>
<div class="t" style="left:1092px;top:681px;line-height:13px">10.0.1.25</div>
<div class="t" style="left:1208px;top:681px;line-height:13px">443</div>
<div class="t" style="left:1277px;top:681px;line-height:13px">N/A</div>
<b class="mg" style="left:1372px;top:681px;width:13px;background:linear-gradient(#ffffc8 0%,#ffff40 45%,#ffff00 100%)"></b>
<b class="mg" style="left:1386px;top:681px;width:4px;background:linear-gradient(#ffffc8 0%,#ffff40 45%,#ffff00 100%)"></b>
<b style="left:1391px;top:681px;width:1px;height:10px;background:#c8c8c8"></b>
<b class="mg" style="left:1392px;top:681px;width:11px;background:linear-gradient(#fdf0c0 0%,#f9d350 45%,#f7c600 100%)"></b>
<div class="t" style="left:48px;top:695px;line-height:13px">Firewall Permit</div>
<div class="t" style="left:304px;top:695px;line-height:13px">Stormshield SNS device</div>
<div class="t" style="left:445px;top:695px;width:54px;text-align:right;line-height:13px">2</div>
<div class="t" style="left:508px;top:695px;line-height:13px">20 Oct 2020, 14:52:26</div>
<div class="t" style="left:689px;top:695px;line-height:13px">Firewall Permit</div>
<i class="fl" style="left:818px;top:696px;"><b style="left:0;top:0;width:5px;height:10px;border:1px solid #2f5fc8;border-right:0;background:linear-gradient(90deg,#7898e0,#c4d0ee)"></b><b style="left:5px;top:0;width:4px;height:10px;border-top:1px solid #c0c0c8;border-bottom:1px solid #c0c0c8;background:#ececec"></b><b style="left:9px;top:0;width:5px;height:10px;border:1px solid #d41010;border-left:0;background:linear-gradient(90deg,#f4a0a0,#e43030)"></b></i>
<div class="t" style="left:1007px;top:695px;line-height:13px">59107</div>
<div class="t" style="left:1092px;top:695px;line-height:13px">10.0.1.9</div>
<div class="t" style="left:1208px;top:695px;line-height:13px">443</div>
<div class="t" style="left:1277px;top:695px;line-height:13px">N/A</div>
<b class="mg" style="left:1372px;top:695px;width:13px;background:linear-gradient(#ffffc8 0%,#ffff40 45%,#ffff00 100%)"></b>
<b class="mg" style="left:1386px;top:695px;width:4px;background:linear-gradient(#ffffc8 0%,#ffff40 45%,#ffff00 100%)"></b>
<b style="left:1391px;top:695px;width:1px;height:10px;background:#c8c8c8"></b>
<b class="mg" style="left:1392px;top:695px;width:11px;background:linear-gradient(#fdf0c0 0%,#f9d350 45%,#f7c600 100%)"></b>
<div class="t" style="left:48px;top:709px;line-height:13px">Firewall Permit</div>
<div class="t" style="left:304px;top:709px;line-height:13px">Stormshield SNS device</div>
<div class="t" style="left:445px;top:709px;width:54px;text-align:right;line-height:13px">5</div>
<div class="t" style="left:508px;top:709px;line-height:13px">20 Oct 2020, 14:52:22</div>
<div class="t" style="left:689px;top:709px;line-height:13px">Firewall Permit</div>
<i class="fl" style="left:818px;top:710px;"><b style="left:0;top:0;width:5px;height:10px;border:1px solid #2f5fc8;border-right:0;background:linear-gradient(90deg,#7898e0,#c4d0ee)"></b><b style="left:5px;top:0;width:4px;height:10px;border-top:1px solid #c0c0c8;border-bottom:1px solid #c0c0c8;background:#ececec"></b><b style="left:9px;top:0;width:5px;height:10px;border:1px solid #d41010;border-left:0;background:linear-gradient(90deg,#f4a0a0,#e43030)"></b></i>
<div class="t" style="left:1007px;top:709px;line-height:13px">59103</div>
<div class="t" style="left:1092px;top:709px;line-height:13px">10.0.1.25</div>
<div class="t" style="left:1208px;top:709px;line-height:13px">443</div>
<div class="t" style="left:1277px;top:709px;line-height:13px">N/A</div>
<b class="mg" style="left:1372px;top:709px;width:13px;background:linear-gradient(#ffffc8 0%,#ffff40 45%,#ffff00 100%)"></b>
<b class="mg" style="left:1386px;top:709px;width:4px;background:linear-gradient(#ffffc8 0%,#ffff40 45%,#ffff00 100%)"></b>
<b style="left:1391px;top:709px;width:1px;height:10px;background:#c8c8c8"></b>
<b class="mg" style="left:1392px;top:709px;width:11px;background:linear-gradient(#fdf0c0 0%,#f9d350 45%,#f7c600 100%)"></b>
<div class="t" style="left:48px;top:723px;line-height:13px">Firewall Permit</div>
<div class="t" style="left:304px;top:723px;line-height:13px">Stormshield SNS device</div>
<div class="t" style="left:445px;top:723px;width:54px;text-align:right;line-height:13px">2</div>
<div class="t" style="left:508px;top:723px;line-height:13px">20 Oct 2020, 14:52:20</div>
<div class="t" style="left:689px;top:723px;line-height:13px">Firewall Permit</div>
<div class="t" style="left:833px;top:723px;line-height:13px">10.0.1.9</div>
<div class="t" style="left:1007px;top:723px;line-height:13px">63567</div>
<i class="fl" style="left:1077px;top:724px;background:repeating-linear-gradient(#e86a6a 0,#e86a6a 1px,#f6f0f0 1px,#f6f0f0 2px);box-shadow:inset 0 0 0 1px #d04848"><b style="position:absolute;left:1px;top:1px;width:7px;height:5px;background:#4a80e0"></b></i>
<b style="left:1093px;top:723px;width:7px;height:7px;background:#d8d6dc"></b><b style="left:1093px;top:730px;width:7px;height:5px;background:#dedede"></b><b style="left:1100px;top:723px;width:7px;height:7px;background:#cacaca"></b><b style="left:1100px;top:730px;width:7px;height:5px;background:#d8d8d8"></b><b style="left:1107px;top:723px;width:7px;height:7px;background:#e4e4e4"></b><b style="left:1107px;top:730px;width:7px;height:5px;background:#f2f2f2"></b><b style="left:1114px;top:723px;width:7px;height:7px;background:#dcdcdc"></b><b style="left:1114px;top:730px;width:7px;height:5px;background:#eaeaea"></b><b style="left:1121px;top:723px;width:7px;height:7px;background:#eaeaea"></b><b style="left:1121px;top:730px;width:7px;height:5px;background:#f8f8f8"></b><b style="left:1128px;top:723px;width:5px;height:7px;background:#d6d6d6"></b><b style="left:1128px;top:730px;width:5px;height:5px;background:#e4e4e4"></b><b style="left:1093px;top:723px;width:1px;height:12px;background:#e0a8a8"></b>
<div class="t" style="left:1208px;top:723px;line-height:13px">53</div>
<div class="t" style="left:1277px;top:723px;line-height:13px">N/A</div>
<b class="mg" style="left:1372px;top:723px;width:23px;background:linear-gradient(#fdf0c0 0%,#f9d350 45%,#f7c600 100%)"></b>
<b style="left:1396px;top:723px;width:1px;height:10px;background:#c8c8c8"></b>
<b class="mg" style="left:1397px;top:723px;width:4px;background:linear-gradient(#ffffc8 0%,#ffff40 45%,#ffff00 100%)"></b>
<b style="left:1402px;top:723px;width:1px;height:10px;background:#c8c8c8"></b>
<b class="mg" style="left:1403px;top:723px;width:9px;background:linear-gradient(#fdf0c0 0%,#f9d350 45%,#f7c600 100%)"></b>
<div class="t" style="left:48px;top:737px;line-height:13px">Authentication failure on the firewall via SSH</div>
<div class="t" style="left:304px;top:737px;line-height:13px">Stormshield SNS device</div>
<div class="t" style="left:445px;top:737px;width:54px;text-align:right;line-height:13px">1</div>
<div class="t" style="left:508px;top:737px;line-height:13px">20 Oct 2020, 14:52:22</div>
<div class="t" style="left:689px;top:737px;line-height:13px">SSH Login Failed</div>
<i class="fl" style="left:818px;top:738px;"><b style="left:0;top:0;width:5px;height:10px;border:1px solid #2f5fc8;border-right:0;background:linear-gradient(90deg,#7898e0,#c4d0ee)"></b><b style="left:5px;top:0;width:4px;height:10px;border-top:1px solid #c0c0c8;border-bottom:1px solid #c0c0c8;background:#ececec"></b><b style="left:9px;top:0;width:5px;height:10px;border:1px solid #d41010;border-left:0;background:linear-gradient(90deg,#f4a0a0,#e43030)"></b></i>
<b style="left:834px;top:737px;width:7px;height:7px;background:#dedce2"></b><b style="left:834px;top:744px;width:7px;height:5px;background:#e4e4e4"></b><b style="left:841px;top:737px;width:7px;height:7px;background:#e6e6e6"></b><b style="left:841px;top:744px;width:7px;height:5px;background:#f4f4f4"></b><b style="left:848px;top:737px;width:7px;height:7px;background:#cccccc"></b><b style="left:848px;top:744px;width:7px;height:5px;background:#dadada"></b><b style="left:855px;top:737px;width:7px;height:7px;background:#cfcfcf"></b><b style="left:855px;top:744px;width:7px;height:5px;background:#dddddd"></b><b style="left:862px;top:737px;width:7px;height:7px;background:#e2e2e2"></b><b style="left:862px;top:744px;width:7px;height:5px;background:#f0f0f0"></b><b style="left:869px;top:737px;width:7px;height:7px;background:#d0d0d0"></b><b style="left:869px;top:744px;width:7px;height:5px;background:#dedede"></b><b style="left:876px;top:737px;width:7px;height:7px;background:#c6c6c6"></b><b style="left:876px;top:744px;width:7px;height:5px;background:#d4d4d4"></b><b style="left:883px;top:737px;width:7px;height:7px;background:#e4e4e4"></b><b style="left:883px;top:744px;width:7px;height:5px;background:#f2f2f2"></b><b style="left:890px;top:737px;width:7px;height:7px;background:#dadada"></b><b style="left:890px;top:744px;width:7px;height:5px;background:#e8e8e8"></b><b style="left:897px;top:737px;width:7px;height:7px;background:#cccccc"></b><b style="left:897px;top:744px;width:7px;height:5px;background:#dadada"></b><b style="left:904px;top:737px;width:7px;height:7px;background:#e8e8e8"></b><b style="left:904px;top:744px;width:7px;height:5px;background:#f6f6f6"></b><b style="left:834px;top:737px;width:1px;height:12px;background:#e0a8a8"></b>
<div class="t" style="left:1007px;top:737px;line-height:13px">0</div>
<div class="t" style="left:1092px;top:737px;line-height:13px">0.0.0.0</div>
<div class="t" style="left:1208px;top:737px;line-height:13px">0</div>
<div class="t" style="left:1277px;top:737px;line-height:13px">N/A</div>
<b class="mg" style="left:1372px;top:737px;width:4px;background:linear-gradient(#ffffc8 0%,#ffff40 45%,#ffff00 100%)"></b>
<b style="left:1377px;top:737px;width:1px;height:10px;background:#c8c8c8"></b>
<b class="mg" style="left:1378px;top:737px;width:12px;background:linear-gradient(#ffffc8 0%,#ffff40 45%,#ffff00 100%)"></b>
<b style="left:1391px;top:737px;width:1px;height:10px;background:#c8c8c8"></b>
<b class="mg" style="left:1392px;top:737px;width:11px;background:linear-gradient(#fdf0c0 0%,#f9d350 45%,#f7c600 100%)"></b>
<b style="left:1093px;top:530px;width:10px;height:14px;background:#dccccc"></b><b style="left:1103px;top:530px;width:14px;height:14px;background:#d2d6d8"></b><b style="left:1117px;top:530px;width:14px;height:14px;background:#d2d2d2"></b><b style="left:1131px;top:530px;width:14px;height:14px;background:#d6d6d6"></b><b style="left:1145px;top:530px;width:14px;height:14px;background:#d2d2d2"></b><b style="left:1159px;top:530px;width:11px;height:14px;background:#eeeeee"></b><b style="left:1093px;top:544px;width:10px;height:14px;background:#d8d2d2"></b><b style="left:1103px;top:544px;width:14px;height:14px;background:#d6d6d6"></b><b style="left:1117px;top:544px;width:14px;height:14px;background:#d8d8d8"></b><b style="left:1131px;top:544px;width:14px;height:14px;background:#d2d2d2"></b><b style="left:1145px;top:544px;width:14px;height:14px;background:#d6d6d6"></b><b style="left:1159px;top:544px;width:11px;height:14px;background:#f0f0f0"></b><b style="left:1093px;top:558px;width:10px;height:14px;background:#d6d0d0"></b><b style="left:1103px;top:558px;width:14px;height:14px;background:#dcdcdc"></b><b style="left:1117px;top:558px;width:14px;height:14px;background:#d8d8d8"></b><b style="left:1131px;top:558px;width:14px;height:14px;background:#dcdcdc"></b><b style="left:1145px;top:558px;width:14px;height:14px;background:#f2f2f2"></b><b style="left:1159px;top:558px;width:11px;height:14px;background:#f6f6f6"></b><b style="left:1093px;top:572px;width:10px;height:9px;background:#d8d8dc"></b><b style="left:1103px;top:572px;width:14px;height:9px;background:#dcdcdc"></b><b style="left:1117px;top:572px;width:14px;height:9px;background:#dadada"></b><b style="left:1131px;top:572px;width:14px;height:9px;background:#dedede"></b><b style="left:1145px;top:572px;width:14px;height:9px;background:#f4f4f4"></b><b style="left:1159px;top:572px;width:11px;height:9px;background:#f8f8f8"></b>
<b style="left:1093px;top:598px;width:10px;height:12px;background:#e2d8d8"></b><b style="left:1103px;top:598px;width:14px;height:12px;background:#d8dadc"></b><b style="left:1117px;top:598px;width:14px;height:12px;background:#cdcdcd"></b><b style="left:1131px;top:598px;width:14px;height:12px;background:#d4d4d4"></b><b style="left:1145px;top:598px;width:14px;height:12px;background:#d6d6d6"></b><b style="left:1159px;top:598px;width:7px;height:12px;background:#dedede"></b><b style="left:1166px;top:598px;width:9px;height:12px;background:#f0f0f0"></b><b style="left:1093px;top:610px;width:10px;height:12px;background:#e0dcdc"></b><b style="left:1103px;top:610px;width:14px;height:12px;background:#dcdcdc"></b><b style="left:1117px;top:610px;width:14px;height:12px;background:#d2d2d2"></b><b style="left:1131px;top:610px;width:14px;height:12px;background:#d8d8d8"></b><b style="left:1145px;top:610px;width:14px;height:12px;background:#dadada"></b><b style="left:1159px;top:610px;width:7px;height:12px;background:#e4e4e4"></b><b style="left:1166px;top:610px;width:9px;height:12px;background:#f4f4f4"></b>
<b style="left:834px;top:683px;width:11px;height:37px;background:#d8d8d8"></b><b style="left:845px;top:683px;width:10px;height:37px;background:#e0e0e0"></b><b style="left:855px;top:683px;width:11px;height:37px;background:#d2d2d2"></b><b style="left:866px;top:683px;width:11px;height:37px;background:#dcdcdc"></b><b style="left:877px;top:683px;width:11px;height:37px;background:#d0d0d0"></b><b style="left:888px;top:683px;width:10px;height:37px;background:#e4e4e4"></b><b style="left:898px;top:683px;width:11px;height:37px;background:#dcdcdc"></b>
<b style="left:834px;top:683px;width:10px;height:37px;background:#d9c9c9"></b>
<b style="left:844px;top:683px;width:11px;height:37px;background:#dce1e3"></b>
</body></html>
